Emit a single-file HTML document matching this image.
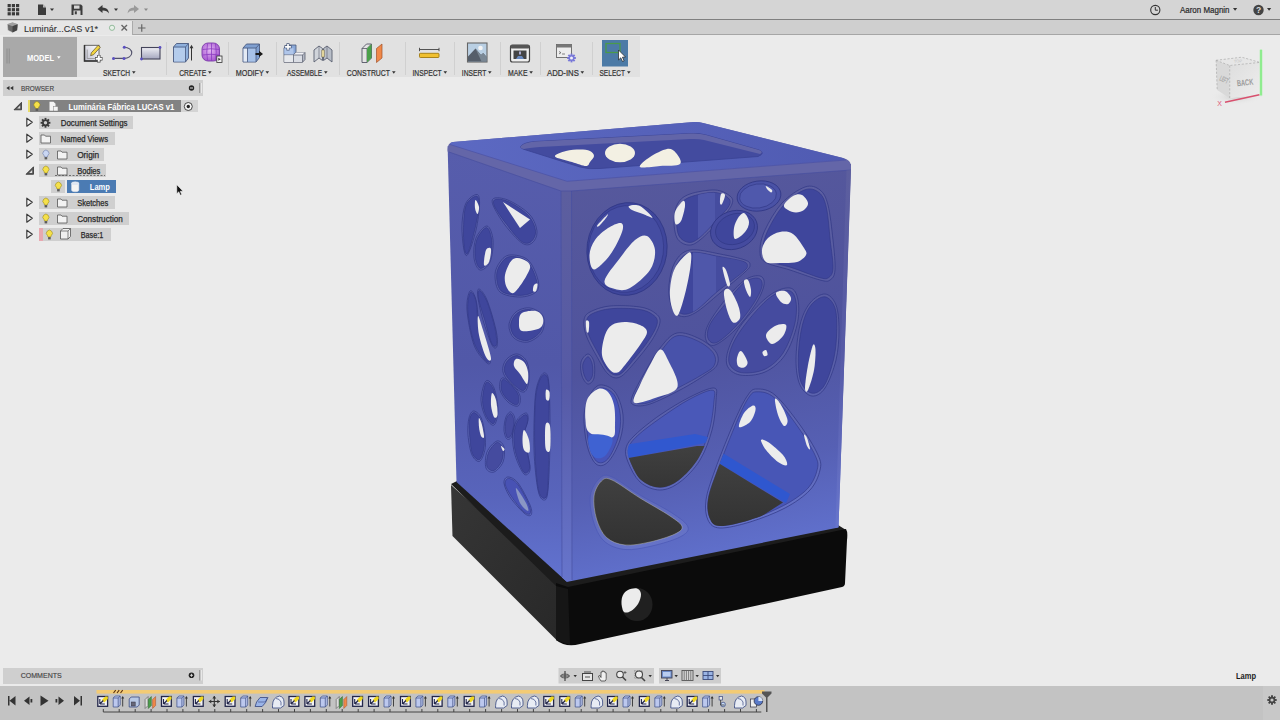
<!DOCTYPE html><html><head><meta charset="utf-8"><title>Fusion</title><style>
*{margin:0;padding:0;box-sizing:border-box}
html,body{width:1280px;height:720px;overflow:hidden;background:#ebebeb;font-family:"Liberation Sans",sans-serif;color:#333}
.abs{position:absolute}
#topbar{left:0;top:0;width:1280px;height:20px;background:#d5d5d5;border-bottom:1.5px solid #808080}
#tabbar{left:0;top:20px;width:1280px;height:15px;background:#cfcfcf;border-bottom:1px solid #a6a6a6}
#tab{left:0;top:20.5px;width:133px;height:14.5px;background:#e6e6e6;border-right:1px solid #aaa}
#tabtxt{left:24px;top:22.5px;font-size:9.6px;color:#333;letter-spacing:0.1px;white-space:nowrap}
#toolbar{left:2.5px;top:36.2px;width:637px;height:40.7px;background:#e1e1e1}
#modelbtn{left:2.8px;top:37px;width:74.2px;height:39.6px;background:#a9a9a9}
.tl{position:absolute;top:69px;font-size:7.7px;color:#3a3a3a;white-space:nowrap;letter-spacing:0.1px}
.sep{position:absolute;top:42px;width:1px;height:33px;background:#d0d0d0}
.hdr{position:absolute;left:3px;width:200px;background:#cfcfcf;font-size:7.4px;color:#444}
.row{position:absolute;height:12.4px;background:#cfcfcf}
.rt{position:absolute;font-size:7.6px;color:#2e2e2e;white-space:nowrap;letter-spacing:0.15px;-webkit-text-stroke:0.15px #2e2e2e}
#timeline{left:0;top:686.4px;width:1280px;height:34px;background:#c3c3c3}
#user{left:1180px;top:5.5px;font-size:8px;color:#333;white-space:nowrap}
svg{position:absolute;left:0;top:0}
</style></head><body>
<div class="abs" id="topbar"></div><div class="abs" id="tabbar"></div><div class="abs" id="tab"></div>
<div class="abs" id="toolbar"></div><div class="abs" id="modelbtn"></div>
<div class="sep" style="left:166.0px"></div>
<div class="sep" style="left:227.5px"></div>
<div class="sep" style="left:276.0px"></div>
<div class="sep" style="left:339.0px"></div>
<div class="sep" style="left:405.0px"></div>
<div class="sep" style="left:454.0px"></div>
<div class="sep" style="left:499.5px"></div>
<div class="sep" style="left:539.5px"></div>
<div class="sep" style="left:592.0px"></div>
<div class="hdr" style="top:79.7px;height:16.5px"></div>
<div class="hdr" style="top:667.5px;height:16px"></div>
<div class="row" style="left:28px;top:100.1px;width:2px;background:#e8dc6a"></div>
<div class="row" style="left:30px;top:100.1px;width:151px;background:#828282"></div>
<div class="row" style="left:181px;top:100.1px;width:17px;background:#d4d4d4"></div>
<div class="row" style="left:39.0px;top:116.2px;width:94.0px"></div>
<div class="row" style="left:39.0px;top:132.2px;width:75.5px"></div>
<div class="row" style="left:39.0px;top:148.2px;width:65.0px"></div>
<div class="row" style="left:39.0px;top:164.2px;width:67.3px"></div>
<div class="row" style="left:39.0px;top:196.2px;width:76.0px"></div>
<div class="row" style="left:39.0px;top:212.2px;width:89.7px"></div>
<div class="row" style="left:39.0px;top:228.2px;width:71.6px"></div>
<div class="row" style="left:39px;top:228.2px;width:3.5px;background:#e8a8b0"></div>
<div class="row" style="left:51px;top:180.2px;width:14px"></div>
<div class="row" style="left:67.3px;top:180.2px;width:49.2px;background:#4b7bb3"></div>
<div class="abs" id="timeline"></div>
<svg width="1280" height="720" viewBox="0 0 1280 720" font-family="Liberation Sans, sans-serif">
<defs>
<linearGradient id="gL" x1="0" y1="0" x2="0" y2="1"><stop offset="0" stop-color="#575dac"/><stop offset="0.5" stop-color="#5158a8"/><stop offset="0.8" stop-color="#5864bb"/><stop offset="1" stop-color="#6273d0"/></linearGradient>
<linearGradient id="gR" x1="0" y1="0" x2="0.15" y2="1"><stop offset="0" stop-color="#57599c"/><stop offset="0.5" stop-color="#4f539d"/><stop offset="0.8" stop-color="#5660b4"/><stop offset="1" stop-color="#6070cc"/></linearGradient>
<linearGradient id="gT" x1="0" y1="0" x2="1" y2="0"><stop offset="0" stop-color="#5c69c2"/><stop offset="1" stop-color="#505bb2"/></linearGradient>
<linearGradient id="gBL" x1="0" y1="0" x2="1" y2="1"><stop offset="0" stop-color="#363636"/><stop offset="1" stop-color="#282828"/></linearGradient>
<linearGradient id="gFl" x1="0" y1="0" x2="0" y2="1"><stop offset="0" stop-color="#404040"/><stop offset="1" stop-color="#323232"/></linearGradient>
<linearGradient id="gV" x1="0" y1="0" x2="0" y2="1"><stop offset="0" stop-color="#5c5e9e"/><stop offset="0.5" stop-color="#565aa6"/><stop offset="1" stop-color="#6775cc"/></linearGradient>
</defs>
<path d="M451.0 485.0L558.0 580.0L557.0 640.5L452.5 536.0Z" fill="url(#gBL)"/>
<path d="M451.0 484.0L457.0 481.0L566.0 580.0L838.0 525.0L846.0 530.0L568.0 588.0L556.0 586.0Z" fill="#1c1c1c"/>
<path d="M556 583 L568 587 L846 529 Q848 532 847 540 L845 583 Q845 586 842 587 L580 644 Q566 648 556 640 Z" fill="#0b0b0b"/>
<path d="M556.0 586.0L568.0 589.0L570.0 645.0L556.0 640.0Z" fill="#161616"/>
<ellipse cx="637" cy="604.5" rx="15.5" ry="16.5" fill="#202020"/>
<path d="M628.0 590.0C630.3 588.9 634.8 587.8 637.0 588.5C639.2 589.2 640.8 591.4 641.0 594.0C641.2 596.6 639.7 601.2 638.0 604.0C636.3 606.8 633.3 609.7 631.0 611.0C628.7 612.3 625.6 613.3 624.0 612.0C622.4 610.7 621.7 605.8 621.5 603.0C621.3 600.2 621.9 597.2 623.0 595.0C624.1 592.8 625.7 591.1 628.0 590.0Z" fill="#ececec"/>
<path d="M447.6 146.0L566.0 188.0L566.5 581.5L456.5 482.0Z" fill="url(#gL)"/>
<path d="M566.0 188.0L851.0 164.0L838.5 527.5L566.5 582.0Z" fill="url(#gR)"/>
<path d="M447.600 150 Q447.300 143 453 142 L694 122 Q698 121.5 703 123 L843 158 Q851 160 851 166 L851 170 L571 191 L561 191 L447.600 151.500Z" fill="#6466a8"/>
<path d="M450 144.5 Q450 142.5 453 142 L694 122 Q698 121.5 703 123 L841 157.5 Q848 159.5 843 160 L567 181.3 Z" fill="url(#gT)"/>
<path d="M561.0 191.0L571.5 191.0L572.0 580.5L566.5 581.5L562.0 577.5Z" fill="url(#gV)"/>
<path d="M561 191 L562 577" stroke="#4750a2" stroke-width="0.7" fill="none"/>
<path d="M571.5 191 L572 580" stroke="#4750a2" stroke-width="0.7" fill="none"/>
<path d="M449 152 L561 191 L571.5 191 L851 170" stroke="#474f9f" stroke-width="0.7" fill="none"/>
<path d="M450 144.5 L567 181.3 L846 160" stroke="#4a52a6" stroke-width="0.7" fill="none"/>
<path d="M846.5 170.5L851.0 170.0L838.5 527.0L835.5 528.0Z" fill="url(#gV)"/>
<path d="M521 146 Q524 142.5 535 141.5 L690 133.5 Q700 133 706 135 L759 150 Q766 153 758 156.5 L600 168.5 Q588 169.5 580 167 L526 150 Q519 148 521 146Z" fill="#434b9f" stroke="#3a4294" stroke-width="0.8"/>
<path d="M521 146 Q524 142.5 535 141.5 L690 133.5 Q700 133 706 135 L759 150 Q764 152 760 154 L704 140 Q698 138.5 690 139 L540 147 Q528 148 524 149 Q519 148 521 146Z" fill="#6265a8"/>
<path d="M555.0 156.5C554.0 154.7 561.8 152.2 566.0 151.0C570.2 149.8 576.0 149.5 580.0 149.5C584.0 149.5 587.7 149.9 590.0 151.0C592.3 152.1 594.0 154.2 594.0 156.0C594.0 157.8 591.3 160.3 590.0 162.0C588.7 163.7 589.0 166.0 586.0 166.0C583.0 166.0 577.2 163.6 572.0 162.0C566.8 160.4 556.0 158.3 555.0 156.5Z" fill="#f3f0e3"/>
<ellipse cx="620" cy="153" rx="15" ry="9.2" fill="#f3f0e3"/>
<path d="M640.0 167.0C638.3 165.5 645.5 160.0 650.0 157.0C654.5 154.0 662.7 149.7 667.0 149.0C671.3 148.3 673.8 150.5 676.0 153.0C678.2 155.5 682.7 161.8 680.0 164.0C677.3 166.2 666.7 165.5 660.0 166.0C653.3 166.5 641.7 168.5 640.0 167.0Z" fill="#f3f0e3"/>
<path d="M477.0 194.5C479.2 194.8 479.7 199.1 479.5 205.0C479.3 210.9 477.9 221.8 476.0 230.0C474.1 238.2 470.0 250.7 468.0 254.0C466.0 257.3 465.0 254.8 464.0 250.0C463.0 245.2 461.7 232.8 462.0 225.0C462.3 217.2 463.5 208.1 466.0 203.0C468.5 197.9 474.8 194.2 477.0 194.5Z" fill="rgba(255,255,255,0.05)" stroke="#2f3684" stroke-width="0.7"/>
<path d="M476.6 196.1C478.7 196.4 479.1 201.0 478.8 206.4C478.5 211.9 476.8 221.1 475.0 228.8C473.2 236.4 469.9 249.1 468.1 252.4C466.4 255.7 465.1 253.1 464.4 248.4C463.6 243.8 463.2 232.0 463.6 224.6C463.9 217.3 464.2 209.3 466.3 204.6C468.5 199.8 474.6 195.7 476.6 196.1Z" fill="#3f469c" stroke="#2f3684" stroke-width="0.6"/>
<path d="M475.5 200.0C476.2 199.8 478.7 204.7 479.0 207.0C479.3 209.3 478.2 213.8 477.5 214.0C476.8 214.2 475.3 210.3 475.0 208.0C474.7 205.7 474.8 200.2 475.5 200.0Z" fill="#ececec"/>
<path d="M495.0 198.0C497.8 197.3 504.2 198.2 510.0 201.0C515.8 203.8 525.5 209.8 530.0 215.0C534.5 220.2 536.7 227.3 537.0 232.0C537.3 236.7 534.5 241.2 532.0 243.0C529.5 244.8 526.5 246.0 522.0 243.0C517.5 240.0 509.8 231.3 505.0 225.0C500.2 218.7 494.7 209.5 493.0 205.0C491.3 200.5 492.2 198.7 495.0 198.0Z" fill="rgba(255,255,255,0.05)" stroke="#2f3684" stroke-width="0.7"/>
<path d="M496.1 199.2C498.8 198.6 505.0 199.8 510.4 202.5C515.8 205.3 524.3 210.8 528.5 215.5C532.7 220.3 535.2 226.9 535.6 231.2C536.0 235.6 533.4 240.0 531.1 241.7C528.7 243.4 525.7 244.4 521.6 241.5C517.5 238.6 511.0 230.3 506.5 224.3C501.9 218.4 496.1 210.1 494.3 205.9C492.6 201.7 493.4 199.7 496.1 199.2Z" fill="#3f469c" stroke="#2f3684" stroke-width="0.6"/>
<path d="M503.0 202.0L530.0 219.5L520.0 228.0Z" fill="#ececec"/>
<path d="M487.0 226.0C489.8 226.3 492.5 234.0 493.0 240.0C493.5 246.0 492.2 257.0 490.0 262.0C487.8 267.0 482.7 270.7 480.0 270.0C477.3 269.3 474.7 263.3 474.0 258.0C473.3 252.7 473.8 243.3 476.0 238.0C478.2 232.7 484.2 225.7 487.0 226.0Z" fill="rgba(255,255,255,0.05)" stroke="#2f3684" stroke-width="0.7"/>
<path d="M486.7 227.6C489.2 227.9 491.4 235.6 491.8 241.1C492.2 246.6 491.2 256.0 489.3 260.6C487.3 265.1 482.6 269.0 480.3 268.4C477.9 267.8 475.7 261.7 475.2 256.9C474.6 252.0 475.0 244.2 476.9 239.3C478.8 234.4 484.3 227.3 486.7 227.6Z" fill="#3f469c" stroke="#2f3684" stroke-width="0.6"/>
<path d="M486.0 250.0C487.2 247.3 490.5 247.0 491.0 249.0C491.5 251.0 490.2 259.3 489.0 262.0C487.8 264.7 484.5 267.0 484.0 265.0C483.5 263.0 484.8 252.7 486.0 250.0Z" fill="#ececec"/>
<path d="M510.0 255.0C514.7 254.7 523.3 255.8 528.0 260.0C532.7 264.2 536.7 274.7 538.0 280.0C539.3 285.3 539.0 289.2 536.0 292.0C533.0 294.8 526.0 297.0 520.0 297.0C514.0 297.0 504.2 295.7 500.0 292.0C495.8 288.3 495.0 280.0 495.0 275.0C495.0 270.0 497.5 265.3 500.0 262.0C502.5 258.7 505.3 255.3 510.0 255.0Z" fill="rgba(255,255,255,0.05)" stroke="#2f3684" stroke-width="0.7"/>
<path d="M510.4 256.5C514.7 256.2 522.7 257.4 527.1 261.3C531.4 265.2 535.1 274.8 536.4 279.8C537.7 284.7 537.5 288.4 534.7 291.0C531.9 293.6 525.3 295.5 519.7 295.4C514.1 295.4 505.0 294.3 501.1 290.9C497.3 287.5 496.6 279.8 496.6 275.1C496.6 270.5 498.9 266.2 501.2 263.1C503.5 260.0 506.1 256.8 510.4 256.5Z" fill="#3f469c" stroke="#2f3684" stroke-width="0.6"/>
<path d="M505.0 275.0C505.8 270.3 509.2 262.7 512.0 260.0C514.8 257.3 519.0 257.7 522.0 259.0C525.0 260.3 531.2 262.5 530.0 268.0C528.8 273.5 518.8 288.7 515.0 292.0C511.2 295.3 508.7 290.8 507.0 288.0C505.3 285.2 504.2 279.7 505.0 275.0Z" fill="#ececec"/>
<path d="M534.0 285.0C534.8 283.8 537.2 283.0 537.5 284.0C537.8 285.0 536.8 289.8 536.0 291.0C535.2 292.2 533.3 292.0 533.0 291.0C532.7 290.0 533.2 286.2 534.0 285.0Z" fill="#ececec"/>
<path d="M470.0 291.0C471.5 289.3 474.3 293.5 476.0 300.0C477.7 306.5 477.7 320.3 480.0 330.0C482.3 339.7 488.8 352.5 490.0 358.0C491.2 363.5 489.7 365.2 487.0 363.0C484.3 360.8 477.3 353.8 474.0 345.0C470.7 336.2 467.7 319.0 467.0 310.0C466.3 301.0 468.5 292.7 470.0 291.0Z" fill="rgba(255,255,255,0.05)" stroke="#2f3684" stroke-width="0.7"/>
<path d="M470.3 292.6C471.7 290.9 474.7 295.5 476.1 301.6C477.5 307.7 476.8 320.0 479.0 329.2C481.2 338.3 488.1 351.1 489.4 356.5C490.7 361.9 489.1 363.6 486.6 361.5C484.1 359.3 477.5 351.8 474.3 343.4C471.2 335.1 468.5 319.9 467.8 311.4C467.1 302.9 468.9 294.2 470.3 292.6Z" fill="#3f469c" stroke="#2f3684" stroke-width="0.6"/>
<path d="M479.0 289.0C480.5 289.3 484.2 293.2 487.0 300.0C489.8 306.8 494.3 322.3 496.0 330.0C497.7 337.7 497.7 343.5 497.0 346.0C496.3 348.5 494.3 349.3 492.0 345.0C489.7 340.7 485.3 327.8 483.0 320.0C480.7 312.2 478.7 303.2 478.0 298.0C477.3 292.8 477.5 288.7 479.0 289.0Z" fill="rgba(255,255,255,0.05)" stroke="#2f3684" stroke-width="0.7"/>
<path d="M479.4 290.5C480.8 290.9 484.4 295.2 487.0 301.6C489.6 308.0 493.5 321.6 495.1 328.7C496.6 335.9 497.0 342.0 496.5 344.5C495.9 346.9 493.7 347.6 491.7 343.4C489.7 339.2 486.7 326.8 484.5 319.4C482.3 312.1 479.5 304.3 478.7 299.5C477.8 294.6 478.0 290.2 479.4 290.5Z" fill="#3f469c" stroke="#2f3684" stroke-width="0.6"/>
<path d="M478.0 316.0C478.7 315.2 480.8 323.0 483.0 330.0C485.2 337.0 490.5 353.5 491.0 358.0C491.5 362.5 488.0 360.8 486.0 357.0C484.0 353.2 480.3 341.8 479.0 335.0C477.7 328.2 477.3 316.8 478.0 316.0Z" fill="#ececec"/>
<path d="M530.0 308.0C534.5 308.7 541.0 312.0 543.0 316.0C545.0 320.0 544.5 327.7 542.0 332.0C539.5 336.3 532.7 341.0 528.0 342.0C523.3 343.0 517.2 340.8 514.0 338.0C510.8 335.2 508.7 329.3 509.0 325.0C509.3 320.7 512.5 314.8 516.0 312.0C519.5 309.2 525.5 307.3 530.0 308.0Z" fill="rgba(255,255,255,0.05)" stroke="#2f3684" stroke-width="0.7"/>
<path d="M529.6 309.6C533.7 310.1 539.8 313.1 541.6 316.7C543.4 320.4 542.8 327.4 540.5 331.3C538.3 335.3 532.1 339.5 527.8 340.4C523.6 341.3 517.9 339.4 515.1 336.8C512.2 334.2 510.3 328.9 510.6 325.0C510.9 321.0 513.8 315.8 517.0 313.3C520.2 310.7 525.5 309.0 529.6 309.6Z" fill="#3f469c" stroke="#2f3684" stroke-width="0.6"/>
<path d="M522.0 313.0C524.8 311.2 532.5 310.2 536.0 311.0C539.5 311.8 542.3 315.2 543.0 318.0C543.7 320.8 543.5 325.8 540.0 328.0C536.5 330.2 525.5 332.0 522.0 331.0C518.5 330.0 519.0 325.0 519.0 322.0C519.0 319.0 519.2 314.8 522.0 313.0Z" fill="#ececec"/>
<path d="M502.0 378.0C504.0 377.0 509.0 381.0 512.0 384.0C515.0 387.0 519.0 392.3 520.0 396.0C521.0 399.7 520.0 405.0 518.0 406.0C516.0 407.0 511.0 404.7 508.0 402.0C505.0 399.3 501.0 394.0 500.0 390.0C499.0 386.0 500.0 379.0 502.0 378.0Z" fill="rgba(255,255,255,0.05)" stroke="#2f3684" stroke-width="0.7"/>
<path d="M502.8 379.4C504.4 378.6 509.0 382.9 511.6 385.6C514.3 388.2 517.6 392.3 518.5 395.5C519.4 398.7 518.9 403.8 517.2 404.6C515.5 405.5 510.9 402.8 508.3 400.4C505.7 398.1 502.5 393.9 501.5 390.4C500.6 386.9 501.1 380.2 502.8 379.4Z" fill="#3f469c" stroke="#2f3684" stroke-width="0.6"/>
<path d="M517.0 354.0C520.5 354.3 525.0 357.7 527.0 362.0C529.0 366.3 529.5 375.0 529.0 380.0C528.5 385.0 526.8 391.2 524.0 392.0C521.2 392.8 515.5 388.3 512.0 385.0C508.5 381.7 504.0 376.2 503.0 372.0C502.0 367.8 503.7 363.0 506.0 360.0C508.3 357.0 513.5 353.7 517.0 354.0Z" fill="rgba(255,255,255,0.05)" stroke="#2f3684" stroke-width="0.7"/>
<path d="M517.0 355.6C520.1 355.9 524.1 359.2 525.9 363.1C527.6 367.1 528.1 374.6 527.7 379.1C527.3 383.7 526.0 389.8 523.5 390.5C520.9 391.2 515.7 386.6 512.6 383.5C509.4 380.4 505.5 375.7 504.6 372.0C503.7 368.3 505.0 363.9 507.1 361.2C509.1 358.5 513.9 355.3 517.0 355.6Z" fill="#3f469c" stroke="#2f3684" stroke-width="0.6"/>
<path d="M516.0 359.0C517.7 358.3 522.0 359.8 524.0 362.0C526.0 364.2 527.5 368.3 528.0 372.0C528.5 375.7 528.3 383.7 527.0 384.0C525.7 384.3 522.2 377.0 520.0 374.0C517.8 371.0 514.7 368.5 514.0 366.0C513.3 363.5 514.3 359.7 516.0 359.0Z" fill="#ececec"/>
<path d="M486.0 381.0C488.2 379.0 492.0 383.2 494.0 388.0C496.0 392.8 498.0 403.8 498.0 410.0C498.0 416.2 496.0 423.7 494.0 425.0C492.0 426.3 488.2 422.2 486.0 418.0C483.8 413.8 481.0 406.2 481.0 400.0C481.0 393.8 483.8 383.0 486.0 381.0Z" fill="rgba(255,255,255,0.05)" stroke="#2f3684" stroke-width="0.7"/>
<path d="M486.3 382.6C488.1 380.7 491.8 385.1 493.6 389.5C495.3 394.0 496.7 403.4 496.7 409.0C496.8 414.7 495.4 422.2 493.7 423.4C492.0 424.7 488.3 420.3 486.4 416.5C484.5 412.7 482.5 406.3 482.5 400.6C482.5 395.0 484.4 384.4 486.3 382.6Z" fill="#3f469c" stroke="#2f3684" stroke-width="0.6"/>
<path d="M492.0 393.0C492.8 392.2 495.1 396.3 496.0 400.0C496.9 403.7 497.8 412.2 497.5 415.0C497.2 417.8 495.1 418.7 494.0 417.0C492.9 415.3 491.3 409.0 491.0 405.0C490.7 401.0 491.2 393.8 492.0 393.0Z" fill="#ececec"/>
<path d="M474.0 411.0C476.2 411.3 480.1 414.3 482.0 420.0C483.9 425.7 485.8 438.2 485.5 445.0C485.2 451.8 482.2 459.3 480.0 461.0C477.8 462.7 474.0 459.3 472.0 455.0C470.0 450.7 468.5 441.2 468.0 435.0C467.5 428.8 468.0 422.0 469.0 418.0C470.0 414.0 471.8 410.7 474.0 411.0Z" fill="rgba(255,255,255,0.05)" stroke="#2f3684" stroke-width="0.7"/>
<path d="M474.1 412.6C476.1 412.9 479.7 416.3 481.4 421.5C483.1 426.7 484.7 437.5 484.4 443.9C484.1 450.2 481.8 457.8 479.7 459.4C477.7 461.0 474.0 457.5 472.3 453.4C470.6 449.4 470.1 440.7 469.6 435.0C469.1 429.3 468.8 423.2 469.6 419.5C470.3 415.8 472.2 412.3 474.1 412.6Z" fill="#3f469c" stroke="#2f3684" stroke-width="0.6"/>
<path d="M479.0 418.0C479.5 417.7 481.2 421.8 482.0 425.0C482.8 428.2 484.2 435.2 484.0 437.0C483.8 438.8 481.8 437.7 481.0 436.0C480.2 434.3 479.3 430.0 479.0 427.0C478.7 424.0 478.5 418.3 479.0 418.0Z" fill="#ececec"/>
<path d="M511.0 412.0C512.5 412.5 514.8 416.0 515.0 420.0C515.2 424.0 513.3 432.8 512.0 436.0C510.7 439.2 508.3 440.0 507.0 439.0C505.7 438.0 504.2 433.7 504.0 430.0C503.8 426.3 504.8 420.0 506.0 417.0C507.2 414.0 509.5 411.5 511.0 412.0Z" fill="rgba(255,255,255,0.05)" stroke="#2f3684" stroke-width="0.7"/>
<path d="M510.8 413.6C512.0 414.0 513.7 417.6 513.9 421.1C514.0 424.6 512.7 431.7 511.6 434.5C510.5 437.2 508.3 438.3 507.3 437.4C506.2 436.5 505.3 432.1 505.2 429.0C505.1 425.8 505.6 421.1 506.5 418.5C507.5 415.9 509.6 413.2 510.8 413.6Z" fill="#454b9f" stroke="#2f3684" stroke-width="0.6"/>
<path d="M526.0 413.0C527.8 413.0 528.3 416.3 528.0 420.0C527.7 423.7 524.0 429.2 524.0 435.0C524.0 440.8 527.0 449.2 528.0 455.0C529.0 460.8 530.7 466.8 530.0 470.0C529.3 473.2 526.5 476.5 524.0 474.0C521.5 471.5 516.9 461.5 515.0 455.0C513.1 448.5 512.2 440.8 512.5 435.0C512.8 429.2 514.8 423.7 517.0 420.0C519.2 416.3 524.2 413.0 526.0 413.0Z" fill="rgba(255,255,255,0.05)" stroke="#2f3684" stroke-width="0.7"/>
<path d="M525.8 414.6C527.5 414.6 528.0 417.9 527.6 421.6C527.3 425.2 523.7 431.2 523.7 436.6C523.7 441.9 526.4 448.2 527.4 453.5C528.4 458.8 530.2 465.3 529.6 468.5C529.0 471.6 526.2 474.9 523.9 472.4C521.6 469.9 517.5 459.7 515.8 453.6C514.1 447.5 513.6 441.2 513.8 435.9C514.1 430.5 515.4 425.1 517.4 421.5C519.4 418.0 524.1 414.6 525.8 414.6Z" fill="#3f469c" stroke="#2f3684" stroke-width="0.6"/>
<path d="M524.0 430.0C525.1 430.0 528.1 436.3 529.0 440.0C529.9 443.7 530.3 450.3 529.5 452.0C528.7 453.7 525.2 452.0 524.0 450.0C522.8 448.0 522.5 443.3 522.5 440.0C522.5 436.7 522.9 430.0 524.0 430.0Z" fill="#ececec"/>
<path d="M497.0 441.0C499.8 440.2 503.0 443.5 504.0 447.0C505.0 450.5 504.7 457.8 503.0 462.0C501.3 466.2 496.8 471.0 494.0 472.0C491.2 473.0 487.2 471.3 486.0 468.0C484.8 464.7 485.2 456.5 487.0 452.0C488.8 447.5 494.2 441.8 497.0 441.0Z" fill="rgba(255,255,255,0.05)" stroke="#2f3684" stroke-width="0.7"/>
<path d="M496.8 442.6C499.2 441.8 502.1 445.1 502.9 448.2C503.7 451.3 503.1 457.4 501.7 461.1C500.2 464.8 496.6 469.5 494.1 470.4C491.7 471.3 488.0 469.7 487.0 466.8C486.1 463.8 486.7 456.9 488.4 452.8C490.0 448.8 494.4 443.4 496.8 442.6Z" fill="#454b9f" stroke="#2f3684" stroke-width="0.6"/>
<path d="M501.0 446.0C501.2 445.7 504.2 448.2 504.5 449.0C504.8 449.8 503.6 451.5 503.0 451.0C502.4 450.5 500.8 446.3 501.0 446.0Z" fill="#ececec"/>
<path d="M545.0 373.0C546.7 373.8 548.2 373.8 549.0 385.0C549.8 396.2 550.2 422.5 550.0 440.0C549.8 457.5 549.0 480.0 548.0 490.0C547.0 500.0 545.7 500.0 544.0 500.0C542.3 500.0 539.7 498.3 538.0 490.0C536.3 481.7 534.5 465.0 534.0 450.0C533.5 435.0 534.2 411.7 535.0 400.0C535.8 388.3 537.3 384.5 539.0 380.0C540.7 375.5 543.3 372.2 545.0 373.0Z" fill="rgba(255,255,255,0.05)" stroke="#2f3684" stroke-width="0.7"/>
<path d="M544.9 374.6C546.5 375.4 548.2 375.8 548.8 386.6C549.4 397.3 548.9 422.1 548.7 439.0C548.6 456.0 548.6 478.5 547.8 488.4C547.0 498.3 545.6 498.4 544.0 498.4C542.3 498.4 539.7 496.7 538.1 488.4C536.6 480.1 535.2 463.1 534.8 448.6C534.3 434.1 534.6 412.7 535.3 401.6C536.1 390.4 537.5 386.1 539.1 381.6C540.7 377.1 543.3 373.8 544.9 374.6Z" fill="#3f469c" stroke="#2f3684" stroke-width="0.6"/>
<path d="M546.0 390.0C546.6 388.8 549.0 390.3 549.5 392.0C550.0 393.7 549.6 398.8 549.0 400.0C548.4 401.2 546.5 400.7 546.0 399.0C545.5 397.3 545.4 391.2 546.0 390.0Z" fill="#ececec"/>
<path d="M545.5 425.0C546.2 421.3 549.2 421.8 550.0 426.0C550.8 430.2 550.8 446.3 550.0 450.0C549.2 453.7 546.2 452.2 545.5 448.0C544.8 443.8 544.8 428.7 545.5 425.0Z" fill="#ececec"/>
<path d="M508.0 477.0C510.3 477.0 514.3 478.3 518.0 483.0C521.7 487.7 527.8 499.7 530.0 505.0C532.2 510.3 532.0 513.7 531.0 515.0C530.0 516.3 527.5 516.0 524.0 513.0C520.5 510.0 513.3 502.0 510.0 497.0C506.7 492.0 504.3 486.3 504.0 483.0C503.7 479.7 505.7 477.0 508.0 477.0Z" fill="rgba(255,255,255,0.05)" stroke="#2f3684" stroke-width="0.7"/>
<path d="M508.7 478.4C510.9 478.5 514.7 480.3 518.0 484.6C521.3 488.9 526.7 499.2 528.7 504.1C530.7 508.9 531.0 512.4 530.1 513.7C529.2 514.9 526.5 514.3 523.5 511.5C520.4 508.7 514.6 501.4 511.6 496.8C508.5 492.3 505.6 487.2 505.2 484.1C504.7 481.0 506.6 478.3 508.7 478.4Z" fill="#4852b4" stroke="#2f3684" stroke-width="0.6"/>
<path d="M516.0 488.0C517.0 488.0 524.0 499.2 526.0 503.0C528.0 506.8 529.0 511.0 528.0 511.0C527.0 511.0 522.0 506.8 520.0 503.0C518.0 499.2 515.0 488.0 516.0 488.0Z" fill="#8a96c4"/>
<ellipse cx="627" cy="249" rx="40" ry="46.5" fill="#3f469c" stroke="#2f3684" stroke-width="0.8" transform="rotate(8 627 249)"/>
<ellipse cx="626" cy="249" rx="37.5" ry="43.5" fill="#454da2" stroke="#2f3684" stroke-width="0.6" transform="rotate(8 626 249)"/>
<path d="M597.5 225.0C598.9 223.1 606.1 215.7 607.5 214.5C608.9 213.3 607.4 216.1 606.0 218.0C604.6 219.9 600.4 224.8 599.0 226.0C597.6 227.2 596.1 226.9 597.5 225.0Z" fill="#ececec"/>
<path d="M629.0 206.0C630.3 205.3 636.1 204.1 640.0 206.0C643.9 207.9 652.0 216.2 652.5 217.5C653.0 218.8 646.4 215.2 643.0 214.0C639.6 212.8 634.3 211.3 632.0 210.0C629.7 208.7 627.7 206.7 629.0 206.0Z" fill="#ececec"/>
<path d="M621.0 223.0C623.3 223.7 623.8 226.7 622.0 232.0C620.2 237.3 614.7 248.8 610.0 255.0C605.3 261.2 597.4 269.5 594.0 269.5C590.6 269.5 589.3 259.9 589.5 255.0C589.7 250.1 591.9 244.5 595.0 240.0C598.1 235.5 603.7 230.8 608.0 228.0C612.3 225.2 618.7 222.3 621.0 223.0Z" fill="#ececec"/>
<path d="M647.0 236.0C650.3 237.7 654.5 244.3 655.0 250.0C655.5 255.7 654.2 263.7 650.0 270.0C645.8 276.3 635.8 284.8 630.0 288.0C624.2 291.2 619.2 290.2 615.0 289.0C610.8 287.8 603.7 286.2 604.5 281.0C605.3 275.8 614.9 264.8 620.0 258.0C625.1 251.2 630.5 243.7 635.0 240.0C639.5 236.3 643.7 234.3 647.0 236.0Z" fill="#ececec"/>
<path d="M690.0 194.0C696.2 191.8 708.3 189.7 715.0 190.0C721.7 190.3 727.2 193.7 730.0 196.0C732.8 198.3 733.3 200.3 732.0 204.0C730.7 207.7 727.3 212.0 722.0 218.0C716.7 224.0 705.7 235.5 700.0 240.0C694.3 244.5 691.8 245.3 688.0 245.0C684.2 244.7 679.3 242.2 677.0 238.0C674.7 233.8 673.8 225.8 674.0 220.0C674.2 214.2 675.3 207.3 678.0 203.0C680.7 198.7 683.8 196.2 690.0 194.0Z" fill="rgba(255,255,255,0.05)" stroke="#2f3684" stroke-width="0.7"/>
<path d="M691.3 196.5C696.8 194.5 707.5 192.3 713.6 192.4C719.7 192.6 725.0 195.4 727.6 197.5C730.3 199.6 730.8 201.6 729.4 204.9C728.0 208.3 724.1 212.2 719.2 217.6C714.3 223.0 705.1 233.1 700.1 237.2C695.0 241.3 692.6 242.6 689.1 242.4C685.6 242.2 681.1 239.9 679.0 236.0C676.9 232.2 676.5 224.8 676.7 219.5C677.0 214.2 678.1 208.1 680.5 204.3C682.9 200.5 685.8 198.5 691.3 196.5Z" fill="#3f469c" stroke="#2f3684" stroke-width="0.6"/>
<clipPath id="cR2"><path d="M691.5 196.9C696.9 194.9 707.4 192.6 713.4 192.8C719.4 192.9 724.7 195.7 727.3 197.7C729.9 199.8 730.4 201.7 729.0 205.0C727.6 208.3 723.7 212.2 718.8 217.5C714.0 222.8 705.0 232.7 700.1 236.8C695.1 240.9 692.7 242.2 689.2 242.0C685.8 241.9 681.3 239.5 679.3 235.8C677.3 232.0 676.9 224.6 677.1 219.4C677.4 214.2 678.5 208.2 680.8 204.5C683.2 200.7 686.0 198.8 691.5 196.9Z"/></clipPath>
<rect x="698" y="185" width="17" height="70" fill="#4f57aa" clip-path="url(#cR2)"/>
<rect x="715" y="185" width="20" height="70" fill="#454c9f" clip-path="url(#cR2)"/>
<path d="M683.0 201.0C684.7 200.0 685.3 202.7 685.0 206.0C684.7 209.3 682.6 218.0 681.0 221.0C679.4 224.0 676.5 225.5 675.5 224.0C674.5 222.5 673.8 215.8 675.0 212.0C676.2 208.2 681.3 202.0 683.0 201.0Z" fill="#ececec"/>
<path d="M721.0 194.0C721.8 192.7 724.8 193.3 725.0 195.0C725.2 196.7 722.8 202.7 722.0 204.0C721.2 205.3 720.2 204.7 720.0 203.0C719.8 201.3 720.2 195.3 721.0 194.0Z" fill="#ececec"/>
<ellipse cx="759" cy="196" rx="22" ry="15" fill="#4a52a6" stroke="#2f3684" stroke-width="0.8" transform="rotate(-8 759 196)"/>
<ellipse cx="758" cy="196" rx="18.5" ry="12" fill="#4f58ac" stroke="#2f3684" stroke-width="0.6" transform="rotate(-8 758 196)"/>
<path d="M766.0 186.0C766.8 186.2 771.2 188.9 772.0 190.0C772.8 191.1 771.8 192.7 771.0 192.5C770.2 192.3 767.8 190.1 767.0 189.0C766.2 187.9 765.2 185.8 766.0 186.0Z" fill="#ececec"/>
<ellipse cx="734" cy="230" rx="24" ry="19" fill="#454b9f" stroke="#2f3684" stroke-width="0.8" transform="rotate(-20 734 230)"/>
<ellipse cx="735" cy="229" rx="20" ry="15" fill="#3f469c" stroke="#2f3684" stroke-width="0.6" transform="rotate(-20 735 229)"/>
<path d="M744.0 213.0C745.8 213.7 748.8 218.8 749.0 222.0C749.2 225.2 747.3 229.2 745.0 232.0C742.7 234.8 736.8 239.7 735.0 239.0C733.2 238.3 733.5 231.5 734.0 228.0C734.5 224.5 736.3 220.5 738.0 218.0C739.7 215.5 742.2 212.3 744.0 213.0Z" fill="#ececec"/>
<path d="M805.0 187.0C811.3 184.8 816.2 187.0 820.0 190.0C823.8 193.0 825.8 196.7 828.0 205.0C830.2 213.3 831.8 229.2 833.0 240.0C834.2 250.8 835.5 263.3 835.0 270.0C834.5 276.7 832.5 278.3 830.0 280.0C827.5 281.7 826.7 281.7 820.0 280.0C813.3 278.3 799.2 273.0 790.0 270.0C780.8 267.0 770.0 265.3 765.0 262.0C760.0 258.7 760.0 255.3 760.0 250.0C760.0 244.7 761.3 237.8 765.0 230.0C768.7 222.2 775.3 210.2 782.0 203.0C788.7 195.8 798.7 189.2 805.0 187.0Z" fill="rgba(255,255,255,0.05)" stroke="#2f3684" stroke-width="0.7"/>
<path d="M804.9 189.8C810.8 187.7 815.5 189.7 819.1 192.6C822.6 195.5 824.5 199.4 826.3 207.2C828.2 215.1 829.1 229.8 830.2 239.9C831.3 250.0 833.3 261.8 833.0 268.1C832.7 274.4 830.8 276.1 828.5 277.7C826.1 279.2 825.1 279.1 818.9 277.4C812.7 275.7 799.7 270.2 791.1 267.4C782.5 264.6 772.1 263.6 767.4 260.5C762.7 257.5 762.7 254.3 762.7 249.3C762.8 244.3 764.3 238.0 767.7 230.6C771.2 223.3 777.2 212.2 783.4 205.4C789.6 198.6 798.9 191.9 804.9 189.8Z" fill="#3f469c" stroke="#2f3684" stroke-width="0.6"/>
<path d="M784.0 205.0C784.8 202.7 790.0 197.7 793.0 196.0C796.0 194.3 799.5 193.8 802.0 195.0C804.5 196.2 807.7 200.5 808.0 203.0C808.3 205.5 806.0 208.4 804.0 210.0C802.0 211.6 798.7 212.5 796.0 212.5C793.3 212.5 790.0 211.2 788.0 210.0C786.0 208.8 783.2 207.3 784.0 205.0Z" fill="#ececec"/>
<path d="M762.0 250.0C762.3 246.0 765.0 241.0 768.0 238.0C771.0 235.0 775.8 232.7 780.0 232.0C784.2 231.3 789.0 231.3 793.0 234.0C797.0 236.7 801.8 244.5 804.0 248.0C806.2 251.5 807.2 252.7 806.0 255.0C804.8 257.3 801.3 260.7 797.0 262.0C792.7 263.3 785.2 263.0 780.0 263.0C774.8 263.0 769.0 264.2 766.0 262.0C763.0 259.8 761.7 254.0 762.0 250.0Z" fill="#ececec"/>
<path d="M690.0 250.0C697.5 248.7 710.8 252.3 720.0 254.0C729.2 255.7 740.0 258.2 745.0 260.0C750.0 261.8 750.0 263.0 750.0 265.0C750.0 267.0 750.0 267.3 745.0 272.0C740.0 276.7 728.3 286.2 720.0 293.0C711.7 299.8 701.7 309.2 695.0 313.0C688.3 316.8 684.0 317.3 680.0 316.0C676.0 314.7 672.8 310.2 671.0 305.0C669.2 299.8 668.3 292.2 669.0 285.0C669.7 277.8 671.5 267.8 675.0 262.0C678.5 256.2 682.5 251.3 690.0 250.0Z" fill="rgba(255,255,255,0.05)" stroke="#2f3684" stroke-width="0.7"/>
<path d="M691.3 252.5C698.2 251.3 710.1 255.0 718.6 256.4C727.1 257.9 737.7 259.7 742.5 261.2C747.3 262.8 747.4 264.0 747.3 265.9C747.3 267.7 747.1 268.3 742.2 272.5C737.4 276.7 725.7 284.8 717.9 291.1C710.2 297.4 701.9 306.6 695.8 310.3C689.8 314.1 685.4 314.9 681.6 313.7C677.8 312.5 674.9 308.2 673.3 303.3C671.6 298.5 671.1 291.2 671.8 284.6C672.5 277.9 674.2 268.7 677.4 263.4C680.7 258.0 684.4 253.6 691.3 252.5Z" fill="#3f469c" stroke="#2f3684" stroke-width="0.6"/>
<clipPath id="cR3"><path d="M691.5 252.8C698.3 251.7 710.0 255.4 718.4 256.8C726.9 258.2 737.4 259.9 742.1 261.4C746.9 263.0 747.0 264.1 747.0 266.0C746.9 267.9 746.7 268.5 741.9 272.6C737.0 276.7 725.3 284.6 717.7 290.8C710.0 297.1 701.9 306.2 696.0 309.9C690.0 313.7 685.6 314.5 681.8 313.4C678.1 312.2 675.2 307.9 673.6 303.1C672.0 298.3 671.5 291.1 672.2 284.5C672.9 277.9 674.6 268.9 677.8 263.6C681.0 258.3 684.7 254.0 691.5 252.8Z"/></clipPath>
<rect x="693" y="245" width="23" height="80" fill="#4f57aa" clip-path="url(#cR3)"/>
<rect x="716" y="245" width="40" height="80" fill="#454c9f" clip-path="url(#cR3)"/>
<path d="M689.0 252.5C691.7 251.5 691.5 255.8 691.0 262.0C690.5 268.2 688.2 281.2 686.0 290.0C683.8 298.8 680.3 312.0 678.0 315.0C675.7 318.0 673.3 312.2 672.0 308.0C670.7 303.8 669.5 296.7 670.0 290.0C670.5 283.3 671.8 274.2 675.0 268.0C678.2 261.8 686.3 253.5 689.0 252.5Z" fill="#ececec"/>
<path d="M760.0 276.0C763.2 276.8 764.8 280.2 764.0 285.0C763.2 289.8 759.8 297.5 755.0 305.0C750.2 312.5 741.7 323.3 735.0 330.0C728.3 336.7 719.8 343.3 715.0 345.0C710.2 346.7 707.2 343.3 706.0 340.0C704.8 336.7 704.8 331.7 708.0 325.0C711.2 318.3 718.8 307.5 725.0 300.0C731.2 292.5 739.2 284.0 745.0 280.0C750.8 276.0 756.8 275.2 760.0 276.0Z" fill="rgba(255,255,255,0.05)" stroke="#2f3684" stroke-width="0.7"/>
<path d="M758.3 278.2C761.3 278.9 762.9 282.2 761.9 286.8C760.8 291.4 756.7 298.9 752.3 305.6C747.8 312.3 741.0 321.0 735.0 327.2C729.0 333.4 720.9 340.8 716.4 342.6C711.9 344.3 708.9 341.1 707.9 338.0C706.9 334.8 707.2 329.6 710.4 323.6C713.6 317.6 721.4 308.8 727.0 302.0C732.6 295.1 738.9 286.6 744.1 282.6C749.3 278.7 755.4 277.5 758.3 278.2Z" fill="#454b9f" stroke="#2f3684" stroke-width="0.6"/>
<path d="M722.5 268.0C722.3 265.5 724.8 267.3 726.0 270.0C727.2 272.7 729.8 281.5 730.0 284.0C730.2 286.5 728.2 287.7 727.0 285.0C725.8 282.3 722.7 270.5 722.5 268.0Z" fill="#ececec"/>
<path d="M724.0 292.0C724.5 288.7 727.7 287.8 730.0 290.0C732.3 292.2 736.3 300.3 738.0 305.0C739.7 309.7 740.8 315.1 740.0 318.0C739.2 320.9 735.2 323.8 733.0 322.5C730.8 321.2 728.5 315.1 727.0 310.0C725.5 304.9 723.5 295.3 724.0 292.0Z" fill="#ececec"/>
<path d="M744.0 281.0C744.3 279.3 746.8 278.5 748.0 280.0C749.2 281.5 750.7 287.2 751.0 290.0C751.3 292.8 750.8 297.0 750.0 297.0C749.2 297.0 747.0 292.7 746.0 290.0C745.0 287.3 743.7 282.7 744.0 281.0Z" fill="#ececec"/>
<path d="M790.0 288.0C794.7 288.8 796.8 293.8 798.0 300.0C799.2 306.2 799.2 315.8 797.0 325.0C794.8 334.2 790.3 347.2 785.0 355.0C779.7 362.8 772.5 368.7 765.0 372.0C757.5 375.3 746.3 376.2 740.0 375.0C733.7 373.8 728.7 370.0 727.0 365.0C725.3 360.0 727.0 352.5 730.0 345.0C733.0 337.5 738.3 328.3 745.0 320.0C751.7 311.7 762.5 300.3 770.0 295.0C777.5 289.7 785.3 287.2 790.0 288.0Z" fill="rgba(255,255,255,0.05)" stroke="#2f3684" stroke-width="0.7"/>
<path d="M788.7 290.5C793.1 291.2 795.1 296.1 796.0 302.0C797.0 307.9 796.5 317.3 794.3 325.8C792.1 334.2 787.9 345.7 783.1 353.0C778.2 360.2 771.9 365.9 765.0 369.2C758.0 372.5 747.4 373.6 741.4 372.6C735.5 371.6 730.6 368.0 729.2 363.2C727.7 358.5 729.6 351.1 732.7 344.2C735.7 337.2 741.1 329.4 747.3 321.6C753.4 313.9 762.7 303.0 769.6 297.8C776.5 292.6 784.2 289.7 788.7 290.5Z" fill="#454b9f" stroke="#2f3684" stroke-width="0.6"/>
<path d="M776.0 293.0C776.7 291.2 782.5 290.2 785.0 291.0C787.5 291.8 790.5 295.8 791.0 298.0C791.5 300.2 789.7 303.3 788.0 304.0C786.3 304.7 783.0 303.8 781.0 302.0C779.0 300.2 775.3 294.8 776.0 293.0Z" fill="#ececec"/>
<path d="M766.0 335.0C766.5 332.0 771.7 327.7 775.0 326.0C778.3 324.3 784.7 323.3 786.0 325.0C787.3 326.7 785.3 332.8 783.0 336.0C780.7 339.2 774.8 344.2 772.0 344.0C769.2 343.8 765.5 338.0 766.0 335.0Z" fill="#ececec"/>
<path d="M737.0 358.0C737.5 355.5 739.2 350.3 741.0 351.0C742.8 351.7 747.0 359.2 747.5 362.0C748.0 364.8 745.6 366.8 744.0 367.5C742.4 368.2 739.2 367.6 738.0 366.0C736.8 364.4 736.5 360.5 737.0 358.0Z" fill="#ececec"/>
<path d="M762.5 352.0C762.8 351.0 765.2 349.5 766.0 350.0C766.8 350.5 767.8 354.0 767.5 355.0C767.2 356.0 764.8 356.5 764.0 356.0C763.2 355.5 762.2 353.0 762.5 352.0Z" fill="#ececec"/>
<path d="M825.0 294.0C829.3 294.3 833.7 299.0 836.0 305.0C838.3 311.0 839.0 320.8 839.0 330.0C839.0 339.2 838.3 350.3 836.0 360.0C833.7 369.7 829.0 382.0 825.0 388.0C821.0 394.0 816.2 396.5 812.0 396.0C807.8 395.5 802.7 391.0 800.0 385.0C797.3 379.0 796.0 370.0 796.0 360.0C796.0 350.0 797.7 334.5 800.0 325.0C802.3 315.5 805.8 308.2 810.0 303.0C814.2 297.8 820.7 293.7 825.0 294.0Z" fill="rgba(255,255,255,0.05)" stroke="#2f3684" stroke-width="0.7"/>
<path d="M824.6 296.8C828.7 297.1 832.8 301.7 834.8 307.5C836.9 313.3 836.9 323.2 836.7 331.6C836.5 340.0 835.9 349.2 833.9 358.2C831.8 367.1 828.1 379.4 824.5 385.2C821.0 391.1 816.2 393.7 812.3 393.2C808.4 392.8 803.5 388.2 801.1 382.4C798.8 376.6 798.2 367.6 798.3 358.4C798.4 349.2 799.8 335.8 801.9 327.1C803.9 318.3 806.7 310.8 810.5 305.8C814.3 300.7 820.6 296.5 824.6 296.8Z" fill="#3f469c" stroke="#2f3684" stroke-width="0.6"/>
<path d="M813.0 345.0C814.2 342.5 815.3 345.8 815.5 350.0C815.7 354.2 815.2 363.3 814.0 370.0C812.8 376.7 809.5 387.0 808.0 390.0C806.5 393.0 805.0 392.2 805.0 388.0C805.0 383.8 806.7 372.2 808.0 365.0C809.3 357.8 811.8 347.5 813.0 345.0Z" fill="#ececec"/>
<path d="M590.0 312.0C594.3 309.7 601.7 306.8 610.0 306.0C618.3 305.2 632.5 305.8 640.0 307.0C647.5 308.2 651.7 310.5 655.0 313.0C658.3 315.5 660.5 317.5 660.0 322.0C659.5 326.5 656.2 333.3 652.0 340.0C647.8 346.7 640.3 355.8 635.0 362.0C629.7 368.2 624.5 375.0 620.0 377.0C615.5 379.0 612.0 377.7 608.0 374.0C604.0 370.3 599.7 361.5 596.0 355.0C592.3 348.5 588.0 340.8 586.0 335.0C584.0 329.2 583.3 323.8 584.0 320.0C584.7 316.2 585.7 314.3 590.0 312.0Z" fill="rgba(255,255,255,0.05)" stroke="#2f3684" stroke-width="0.7"/>
<path d="M592.2 313.7C596.3 311.7 603.2 309.4 610.9 308.7C618.6 307.9 631.4 308.3 638.4 309.3C645.3 310.2 649.5 312.2 652.6 314.5C655.8 316.8 657.9 318.7 657.3 322.9C656.8 327.1 653.2 333.5 649.2 339.6C645.3 345.7 638.5 353.8 633.6 359.6C628.7 365.3 624.1 372.2 620.0 374.2C615.8 376.2 612.4 374.8 608.8 371.3C605.2 367.8 601.5 359.3 598.1 353.2C594.8 347.2 590.7 340.4 588.8 335.0C586.9 329.7 586.0 324.6 586.6 321.1C587.1 317.6 588.2 315.8 592.2 313.7Z" fill="#3f469c" stroke="#2f3684" stroke-width="0.6"/>
<path d="M612.0 325.0C615.3 322.8 620.3 322.0 625.0 322.0C629.7 322.0 636.3 323.3 640.0 325.0C643.7 326.7 647.0 328.7 647.0 332.0C647.0 335.3 643.7 339.5 640.0 345.0C636.3 350.5 628.8 360.4 625.0 365.0C621.2 369.6 620.0 371.7 617.5 372.5C615.0 373.3 612.6 372.9 610.0 370.0C607.4 367.1 602.8 360.8 602.0 355.0C601.2 349.2 603.3 340.0 605.0 335.0C606.7 330.0 608.7 327.2 612.0 325.0Z" fill="#ececec"/>
<path d="M586.0 321.0C586.4 319.5 588.6 320.2 589.0 322.0C589.4 323.8 588.9 330.5 588.5 332.0C588.1 333.5 586.9 332.8 586.5 331.0C586.1 329.2 585.6 322.5 586.0 321.0Z" fill="#ececec"/>
<path d="M677.0 333.0C683.7 331.5 693.5 335.8 700.0 339.0C706.5 342.2 713.2 347.7 716.0 352.0C718.8 356.3 718.8 361.2 717.0 365.0C715.2 368.8 711.2 370.8 705.0 375.0C698.8 379.2 689.2 385.2 680.0 390.0C670.8 394.8 657.7 401.5 650.0 404.0C642.3 406.5 637.0 406.2 634.0 405.0C631.0 403.8 630.2 402.5 632.0 397.0C633.8 391.5 640.3 380.2 645.0 372.0C649.7 363.8 654.7 354.5 660.0 348.0C665.3 341.5 670.3 334.5 677.0 333.0Z" fill="rgba(255,255,255,0.05)" stroke="#2f3684" stroke-width="0.7"/>
<path d="M676.8 335.8C682.9 334.3 692.1 338.3 698.2 341.2C704.3 344.1 710.8 349.1 713.4 353.2C716.1 357.2 716.1 361.8 714.2 365.4C712.4 369.0 708.1 371.0 702.2 374.6C696.4 378.3 687.6 382.8 679.2 387.3C670.8 391.8 658.8 399.1 651.7 401.7C644.5 404.4 639.0 404.2 636.1 403.2C633.3 402.2 632.4 400.7 634.4 395.5C636.3 390.3 643.3 379.4 647.8 371.9C652.3 364.4 656.6 356.4 661.5 350.4C666.3 344.4 670.7 337.3 676.8 335.8Z" fill="#4852aa" stroke="#2f3684" stroke-width="0.6"/>
<path d="M660.0 349.5C663.0 348.7 665.1 353.8 668.0 360.0C670.9 366.2 679.7 380.7 677.5 387.0C675.3 393.3 662.2 395.4 655.0 398.0C647.8 400.6 636.5 404.7 634.0 402.5C631.5 400.3 637.3 391.2 640.0 385.0C642.7 378.8 646.7 370.9 650.0 365.0C653.3 359.1 657.0 350.3 660.0 349.5Z" fill="#ececec"/>
<path d="M588.0 354.0C590.2 354.0 593.0 358.0 594.0 362.0C595.0 366.0 595.0 374.3 594.0 378.0C593.0 381.7 590.0 384.3 588.0 384.0C586.0 383.7 583.2 379.7 582.0 376.0C580.8 372.3 580.0 365.7 581.0 362.0C582.0 358.3 585.8 354.0 588.0 354.0Z" fill="rgba(255,255,255,0.05)" stroke="#2f3684" stroke-width="0.7"/>
<path d="M588.0 356.8C589.5 356.8 591.5 361.0 592.2 364.1C592.9 367.3 593.1 372.9 592.4 375.7C591.7 378.6 589.4 381.5 588.0 381.2C586.5 380.9 584.7 376.8 583.8 373.9C583.0 371.0 582.2 366.9 582.9 364.0C583.6 361.2 586.4 356.8 588.0 356.8Z" fill="#454b9f" stroke="#2f3684" stroke-width="0.6"/>
<path d="M600.0 385.0C604.2 384.5 611.2 387.0 615.0 392.0C618.8 397.0 622.2 407.0 623.0 415.0C623.8 423.0 622.5 432.2 620.0 440.0C617.5 447.8 612.0 458.0 608.0 462.0C604.0 466.0 599.5 466.8 596.0 464.0C592.5 461.2 589.0 453.2 587.0 445.0C585.0 436.8 583.5 423.3 584.0 415.0C584.5 406.7 587.3 400.0 590.0 395.0C592.7 390.0 595.8 385.5 600.0 385.0Z" fill="rgba(255,255,255,0.05)" stroke="#2f3684" stroke-width="0.7"/>
<path d="M600.2 387.8C604.0 387.3 610.6 389.9 614.0 394.6C617.3 399.3 619.8 408.8 620.4 416.1C621.1 423.3 620.1 430.9 618.0 438.1C615.8 445.3 611.2 455.4 607.6 459.2C604.0 463.1 599.6 464.0 596.4 461.2C593.3 458.5 590.3 450.2 588.6 442.7C587.0 435.2 586.1 423.7 586.5 416.2C586.9 408.7 588.8 402.3 591.1 397.6C593.4 392.8 596.4 388.3 600.2 387.8Z" fill="#4754b8" stroke="#2f3684" stroke-width="0.6"/>
<path d="M598.0 389.0C601.5 387.7 605.3 389.3 608.0 392.0C610.7 394.7 612.8 399.5 614.0 405.0C615.2 410.5 615.3 419.6 615.0 425.0C614.7 430.4 616.2 436.2 612.0 437.5C607.8 438.8 594.4 435.9 590.0 433.0C585.6 430.1 586.0 425.5 585.5 420.0C585.0 414.5 584.9 405.2 587.0 400.0C589.1 394.8 594.5 390.3 598.0 389.0Z" fill="#ececec"/>
<path d="M590.0 435.0C593.7 433.0 609.3 434.7 612.0 438.0C614.7 441.3 608.7 451.7 606.0 455.0C603.3 458.3 598.7 458.8 596.0 458.0C593.3 457.2 591.0 453.8 590.0 450.0C589.0 446.2 586.3 437.0 590.0 435.0Z" fill="#3f62d2"/>
<path d="M714.0 388.0C718.3 388.5 716.3 393.0 716.0 400.0C715.7 407.0 714.7 420.0 712.0 430.0C709.3 440.0 705.3 451.3 700.0 460.0C694.7 468.7 686.7 477.0 680.0 482.0C673.3 487.0 666.7 490.0 660.0 490.0C653.3 490.0 645.3 486.7 640.0 482.0C634.7 477.3 630.3 467.7 628.0 462.0C625.7 456.3 624.8 452.5 626.0 448.0C627.2 443.5 629.3 440.5 635.0 435.0C640.7 429.5 650.8 421.3 660.0 415.0C669.2 408.7 681.0 401.5 690.0 397.0C699.0 392.5 709.7 387.5 714.0 388.0Z" fill="rgba(255,255,255,0.05)" stroke="#2f3684" stroke-width="0.7"/>
<path d="M712.2 390.2C716.4 390.6 714.4 395.1 713.9 401.9C713.4 408.7 712.0 421.3 709.3 430.7C706.6 440.1 702.7 450.3 697.7 458.4C692.7 466.5 685.6 474.4 679.5 479.3C673.3 484.1 666.9 487.2 660.6 487.3C654.4 487.4 646.7 484.2 641.7 479.8C636.7 475.4 632.7 466.1 630.5 460.8C628.4 455.4 627.6 451.8 628.8 447.6C630.0 443.3 632.4 440.4 637.8 435.4C643.2 430.4 652.6 423.5 661.2 417.5C669.7 411.6 680.4 404.1 688.9 399.6C697.4 395.0 708.1 389.8 712.2 390.2Z" fill="#4a58b8" stroke="#2f3684" stroke-width="0.6"/>
<clipPath id="c15"><path d="M713.0 390.0C717.0 390.2 714.5 393.3 714.0 400.0C713.5 406.7 712.7 420.2 710.0 430.0C707.3 439.8 703.2 450.7 698.0 459.0C692.8 467.3 685.3 475.2 679.0 480.0C672.7 484.8 666.3 487.5 660.0 487.5C653.7 487.5 646.0 484.4 641.0 480.0C636.0 475.6 632.2 466.3 630.0 461.0C627.8 455.7 627.0 452.2 628.0 448.0C629.0 443.8 630.7 441.2 636.0 436.0C641.3 430.8 651.0 423.2 660.0 417.0C669.0 410.8 681.2 403.5 690.0 399.0C698.8 394.5 709.0 389.8 713.0 390.0Z"/></clipPath>
<g clip-path="url(#c15)">
<path d="M620.0 445.5L695.0 434.0L720.0 440.0L620.0 460.0Z" fill="#3158cf"/>
<path d="M620.0 459.5L697.0 446.0L725.0 446.0L720.0 500.0L620.0 500.0Z" fill="url(#gFl)"/>
</g>
<path d="M600.0 478.0C603.6 475.0 605.3 474.2 612.0 477.0C618.7 479.8 630.0 489.0 640.0 495.0C650.0 501.0 664.0 507.7 672.0 513.0C680.0 518.3 686.7 523.0 688.0 527.0C689.3 531.0 686.0 533.8 680.0 537.0C674.0 540.2 661.2 543.9 652.0 546.0C642.8 548.1 633.0 550.3 625.0 549.5C617.0 548.7 609.3 545.9 604.0 541.0C598.7 536.1 595.2 527.7 593.0 520.0C590.8 512.3 589.3 502.0 590.5 495.0C591.7 488.0 596.4 481.0 600.0 478.0Z" fill="rgba(255,255,255,0.06)" stroke="#4a58b4" stroke-width="0.7"/>
<path d="M601.5 481.0C604.5 478.3 605.6 477.2 612.0 480.0C618.4 482.8 630.3 492.0 640.0 498.0C649.7 504.0 663.0 511.2 670.0 516.0C677.0 520.8 681.2 523.5 682.0 526.5C682.8 529.5 680.3 531.4 675.0 534.0C669.7 536.6 658.3 540.2 650.0 542.0C641.7 543.8 632.2 545.8 625.0 545.0C617.8 544.2 611.2 541.8 606.5 537.5C601.8 533.2 598.6 525.9 596.5 519.0C594.4 512.1 593.2 502.3 594.0 496.0C594.8 489.7 598.5 483.7 601.5 481.0Z" fill="url(#gFl)" stroke="#b8b8b0" stroke-width="0.5"/>
<path d="M757.0 389.0C761.5 389.0 767.8 389.0 775.0 395.0C782.2 401.0 792.8 415.0 800.0 425.0C807.2 435.0 814.7 447.5 818.0 455.0C821.3 462.5 821.3 464.2 820.0 470.0C818.7 475.8 815.8 483.7 810.0 490.0C804.2 496.3 795.0 502.7 785.0 508.0C775.0 513.3 760.8 518.7 750.0 522.0C739.2 525.3 727.0 528.3 720.0 528.0C713.0 527.7 710.3 524.7 708.0 520.0C705.7 515.3 704.8 508.3 706.0 500.0C707.2 491.7 710.2 483.3 715.0 470.0C719.8 456.7 729.5 432.5 735.0 420.0C740.5 407.5 744.3 400.2 748.0 395.0C751.7 389.8 752.5 389.0 757.0 389.0Z" fill="rgba(255,255,255,0.05)" stroke="#2f3684" stroke-width="0.7"/>
<path d="M757.1 391.8C761.5 391.8 767.6 391.9 774.4 397.7C781.2 403.6 791.2 417.3 798.0 427.0C804.8 436.6 812.0 448.3 815.2 455.4C818.4 462.5 818.5 464.1 817.2 469.7C815.9 475.2 813.1 482.7 807.5 488.7C801.9 494.6 793.2 500.5 783.7 505.5C774.1 510.6 760.9 515.9 750.5 519.2C740.1 522.6 728.3 525.8 721.5 525.6C714.7 525.4 712.1 522.5 709.9 517.9C707.7 513.4 707.0 506.5 708.3 498.4C709.6 490.4 713.1 482.3 717.8 469.6C722.5 456.9 731.3 434.4 736.4 422.4C741.5 410.4 745.1 402.9 748.5 397.8C752.0 392.7 752.8 391.8 757.1 391.8Z" fill="#4856b6" stroke="#2f3684" stroke-width="0.6"/>
<clipPath id="c17"><path d="M757.0 391.5C761.2 391.5 767.2 391.2 774.0 397.0C780.8 402.8 791.0 416.2 798.0 426.0C805.0 435.8 812.7 448.7 816.0 456.0C819.3 463.3 819.3 464.5 818.0 470.0C816.7 475.5 813.7 483.0 808.0 489.0C802.3 495.0 793.7 500.8 784.0 506.0C774.3 511.2 760.7 516.7 750.0 520.0C739.3 523.3 726.7 526.2 720.0 526.0C713.3 525.8 712.0 523.3 710.0 519.0C708.0 514.7 706.8 508.0 708.0 500.0C709.2 492.0 712.2 484.2 717.0 471.0C721.8 457.8 731.7 433.3 737.0 421.0C742.3 408.7 745.7 401.9 749.0 397.0C752.3 392.1 752.8 391.5 757.0 391.5Z"/></clipPath>
<g clip-path="url(#c17)">
<path d="M700.0 445.0L721.0 452.0L790.0 494.0L786.0 503.0L720.0 464.0L700.0 470.0Z" fill="#2f57cf"/>
<path d="M720.0 464.0L783.0 502.5L740.0 530.0L700.0 530.0L700.0 490.0Z" fill="url(#gFl)"/>
</g>
<path d="M739.0 427.0C738.0 425.5 741.7 416.6 744.0 413.0C746.3 409.4 751.1 406.0 753.0 405.5C754.9 405.0 756.0 407.2 755.5 410.0C755.0 412.8 752.8 419.2 750.0 422.0C747.2 424.8 740.0 428.5 739.0 427.0Z" fill="#ececec"/>
<path d="M775.0 399.0C775.5 397.3 778.9 401.5 781.0 405.0C783.1 408.5 787.0 416.5 787.5 420.0C788.0 423.5 785.6 426.8 784.0 426.0C782.4 425.2 779.5 419.5 778.0 415.0C776.5 410.5 774.5 400.7 775.0 399.0Z" fill="#ececec"/>
<path d="M761.0 440.0C761.3 438.7 764.3 439.5 768.0 442.0C771.7 444.5 779.8 451.2 783.0 455.0C786.2 458.8 787.8 463.8 787.0 465.0C786.2 466.2 781.5 464.5 778.0 462.0C774.5 459.5 768.8 453.7 766.0 450.0C763.2 446.3 760.7 441.3 761.0 440.0Z" fill="#ececec"/>
<path d="M804.0 435.0C804.0 433.7 806.0 435.7 807.0 438.0C808.0 440.3 810.0 447.7 810.0 449.0C810.0 450.3 808.0 448.3 807.0 446.0C806.0 443.7 804.0 436.3 804.0 435.0Z" fill="#ececec"/>
<rect x="7.6" y="4.0" width="3.2" height="3.2" fill="#3a3a3a"/>
<rect x="7.6" y="8.1" width="3.2" height="3.2" fill="#3a3a3a"/>
<rect x="7.6" y="12.2" width="3.2" height="3.2" fill="#3a3a3a"/>
<rect x="11.8" y="4.0" width="3.2" height="3.2" fill="#3a3a3a"/>
<rect x="11.8" y="8.1" width="3.2" height="3.2" fill="#3a3a3a"/>
<rect x="11.8" y="12.2" width="3.2" height="3.2" fill="#3a3a3a"/>
<rect x="16.0" y="4.0" width="3.2" height="3.2" fill="#3a3a3a"/>
<rect x="16.0" y="8.1" width="3.2" height="3.2" fill="#3a3a3a"/>
<rect x="16.0" y="12.2" width="3.2" height="3.2" fill="#3a3a3a"/>
<path d="M38 4.5 l5 0 l3 3 l0 7.5 l-8 0z" fill="#3c3c3c"/><path d="M43 4.5 l0 3 l3 0z" fill="#bbb"/>
<path d="M50 8.5 l4 0 l-2 2.6z" fill="#333"/>
<path d="M71.5 4.5 l9.5 0 l1.5 1.5 l0 9 l-11 0z" fill="#3c3c3c"/><rect x="74" y="5.5" width="5.5" height="3.2" fill="#d5d5d5"/><rect x="73.5" y="10.5" width="7" height="4.5" fill="#d5d5d5"/><rect x="74.8" y="11.3" width="2" height="3" fill="#3c3c3c"/>
<path d="M97.5 9 l5 -4 l0 2.5 q6 0 6.5 6 q-2 -3.2 -6.5 -3 l0 2.5z" fill="#3a3a3a"/><path d="M114 8.5 l4 0 l-2 2.6z" fill="#333"/>
<path d="M139 9 l-5 -4 l0 2.5 q-6 0 -6.5 6 q2 -3.2 6.5 -3 l0 2.5z" fill="#9a9a9a"/><path d="M144 8.5 l4 0 l-2 2.6z" fill="#8a8a8a"/>
<circle cx="1155.3" cy="10" r="4.6" fill="none" stroke="#333" stroke-width="1.1"/><path d="M1155.3 7 l0 3.2 l2.6 0" fill="none" stroke="#333" stroke-width="1"/>
<path d="M1233 8 l4.2 0 l-2.1 2.7z" fill="#333"/>
<circle cx="1258.5" cy="10" r="5.2" fill="#444"/><text x="1258.5" y="13" font-size="8.5" font-weight="bold" fill="#ddd" text-anchor="middle" font-family="Liberation Sans, sans-serif">?</text>
<path d="M1267 8 l4.2 0 l-2.1 2.7z" fill="#333"/>
<path d="M7.3 24.300 l5.200 -1.800 l5.200 1.800 l-0.600 6 l-4.600 2.300 l-4.600 -2.300z" fill="#6a6a6a" stroke="#d8d8d8" stroke-width="0.500"/><path d="M7.300 24.300 l5.200 2 l5.200 -2 l-5.200 -1.800z" fill="#a0a0a0"/><path d="M12.500 26.300 l0 6.300 l4.600 -2.300 l0.600 -6z" fill="#444"/>
<circle cx="112" cy="27.8" r="2.6" fill="#e8f0e8" stroke="#7fb08a" stroke-width="0.8"/>
<path d="M121.5 25 l5.5 5.5 m0 -5.5 l-5.5 5.5" stroke="#666" stroke-width="1.4"/>
<path d="M138 28 l7.5 0 m-3.75 -3.75 l0 7.5" stroke="#666" stroke-width="1.2"/>
<rect x="6.5" y="48.5" width="1" height="15" fill="#8e8e8e"/><rect x="8.7" y="48.5" width="1" height="15" fill="#8e8e8e"/>
<path d="M57 56.3 l3.6 0 l-1.8 2.4z" fill="#fff"/>
<defs><linearGradient id="ig1" x1="1" y1="0" x2="0" y2="1"><stop offset="0" stop-color="#fff"/><stop offset="1" stop-color="#bfc0d0"/></linearGradient><linearGradient id="ig2" x1="0" y1="0" x2="0" y2="1"><stop offset="0" stop-color="#eeeef4"/><stop offset="1" stop-color="#a4a6be"/></linearGradient><radialGradient id="ig3" cx="0.45" cy="0.4" r="0.6"><stop offset="0" stop-color="#e4b8f4"/><stop offset="1" stop-color="#a85ad0"/></radialGradient></defs>
<rect x="84.5" y="45.3" width="14.500" height="15.700" fill="url(#ig1)" stroke="#555" stroke-width="0.9"/><path d="M84.500 45 l0 16 l14.800 0" stroke="#333" stroke-width="1.500" fill="none"/><path d="M87.200 58.500 l0 -9 M87.200 58.500 l8 0" stroke="#888" stroke-width="0.700" fill="none"/><path d="M91.300 52.800 l6.800 -7.500 l2.300 1.900 l-6.800 7.500 l-3 1z" fill="#f2d440" stroke="#5a5030" stroke-width="0.700"/><path d="M98.800 55 l0 7.400 m-3.700 -3.700 l7.400 0" stroke="#444" stroke-width="3.400"/><path d="M98.800 55.600 l0 6.200 m-3.100 -3.100 l6.200 0" stroke="#fff" stroke-width="2"/>
<path d="M113.500 58.400 l10.500 0 M124 58.400 a7.600 5.600 0 0 0 0.300 -11.200" fill="none" stroke="#50506a" stroke-width="1.100"/><circle cx="113.500" cy="58.400" r="1.500" fill="#5a4fc0"/><circle cx="124" cy="58.400" r="1.500" fill="#5a4fc0"/><circle cx="124.300" cy="47.200" r="1.500" fill="#5a4fc0"/>
<rect x="141.500" y="47.500" width="18.500" height="11.500" fill="url(#ig2)" stroke="#44445a" stroke-width="1.100"/><circle cx="141.500" cy="59" r="1.400" fill="#5a4fc0"/><circle cx="160" cy="47.500" r="1.400" fill="#5a4fc0"/>
<path d="M173.500 47 l3 -3.500 l12 0 l0 14.500 l-3 4 l-12 0z" fill="#8fb0dc" stroke="#4a5a80" stroke-width="0.9" stroke-linejoin="round"/><rect x="174" y="47.500" width="11" height="14" fill="#b4ccec"/><path d="M173.500 47 l12 0 l0 15 M185.500 47 l3 -3.500" fill="none" stroke="#4a5a80" stroke-width="0.800"/><path d="M191.500 60.500 l0 -13" stroke="#333" stroke-width="1"/><path d="M189.600 48.200 l1.900 -3.500 l1.900 3.500z" fill="#333"/>
<rect x="202" y="43" width="17.500" height="18" rx="6" fill="url(#ig3)" stroke="#7a3aa8" stroke-width="0.9"/><path d="M202.500 49.500 q8.500 -1.500 17 0 M202.500 55 q8.500 -1.500 17 0 M207.500 43.500 q-1.500 9 0 17 M211.500 43 l0 18 M215.500 43.500 q1.500 9 0 17" stroke="#8a3ac0" stroke-width="0.800" fill="none"/><rect x="216.800" y="56" width="5.200" height="6.500" fill="#f0f0f0" stroke="#333" stroke-width="0.800"/><path d="M218.300 57.800 l2.400 1.500 l-2.400 1.500z" fill="#333"/>
<path d="M243 48 l3.500 -4 l13 0 l0 13.500 l-3.500 4.500 l-13 0z" fill="#7f9fd0" stroke="#4a5a80" stroke-width="0.9" stroke-linejoin="round"/><rect x="243.500" y="48.300" width="4" height="13.300" fill="#e4eaf4"/><rect x="247.500" y="48.300" width="8.500" height="13.300" fill="#a8c2e8"/><path d="M247.500 48 l0 14 M243 48 l13 0 l0 14 M256 48 l3.500 -4" fill="none" stroke="#4a5a80" stroke-width="0.800"/><path d="M255.500 52.900 l3.500 0 l0 -2.200 l4 3.200 l-4 3.200 l0 -2.200 l-3.500 0z" fill="#1a1a1a"/>
<path d="M284 48 l2.500 -3 l9.500 0 l0 7 l-2.500 3 l-9.500 0z" fill="#8aa8d8" stroke="#4a5878" stroke-width="0.800" stroke-linejoin="round"/><rect x="284.300" y="48.200" width="9.200" height="6.800" fill="#b0c6ea"/>
<path d="M284 55 l9.500 0 l2.500 -2.500 l9 0 l0 7 l-2.500 2.800 l-18.500 0z" fill="#b4b8c4" stroke="#5a6070" stroke-width="0.800" stroke-linejoin="round"/><rect x="284.300" y="55.200" width="9" height="6.800" fill="#e6e8ec"/><rect x="293.700" y="55.200" width="8.600" height="6.800" fill="#dadde4"/><path d="M293.600 55 l2.500 -2.500 l8.900 0 l-2.500 2.500z" fill="#f2f2f6"/><path d="M293.500 55 l0 7.200 M293.500 55 l9 0 l2.500 -2.500 M302.500 55 l0 7.200" fill="none" stroke="#5a6070" stroke-width="0.700"/>
<path d="M288 43.200 l0 7.200 m-3.600 -3.600 l7.200 0" stroke="#4a5878" stroke-width="3"/><path d="M288 43.900 l0 5.800 m-2.900 -2.900 l5.800 0" stroke="#fff" stroke-width="1.700"/>
<path d="M314 50 l5 -4 l3.500 2.500 l0 12 l-3.500 -2.500 l-5 4z" fill="#d0d4da" stroke="#5a6070" stroke-width="0.9" stroke-linejoin="round"/><path d="M323.500 48.500 l3.500 -2.500 l5 4 l0 12 l-5 -4 l-3.500 2.500z" fill="#b8bec8" stroke="#5a6070" stroke-width="0.9" stroke-linejoin="round"/><path d="M319 46 l0 12 M327 46 l0 12" stroke="#5a6070" stroke-width="0.600"/><rect x="321.800" y="50" width="2.400" height="7" fill="#e8dca0" stroke="#6a6040" stroke-width="0.500"/>
<path d="M362 48.500 l4.500 -4.500 l5 0 l0 14 l-4.500 4.500 l-5 0z" fill="#e4e4e4" stroke="#556" stroke-width="0.9"/><path d="M367 48.5 l0 14 M362 48.5 l5 0 l4.500 -4.500" fill="none" stroke="#556" stroke-width="0.8"/><path d="M367 48.5 l4.500 -4.500 l0 14 l-4.500 4.500z" fill="#4aa04a"/><path d="M376.500 48.500 l5.500 -4.500 l0 14 l-5.500 4.500z" fill="#f08848" stroke="#a0502a" stroke-width="0.7"/>
<rect x="419.500" y="53.300" width="19.500" height="4.200" rx="0.800" fill="#f0c030" stroke="#a07a10" stroke-width="0.9"/><path d="M419.500 49.500 l19.500 0 M419.500 47.800 l0 3.400 M439 47.800 l0 3.400" stroke="#444" stroke-width="0.9"/>
<rect x="467.500" y="43" width="19.500" height="19" fill="#b9cfe3" stroke="#666" stroke-width="1.100"/><circle cx="480.500" cy="48" r="2.300" fill="#f4f4f4"/><path d="M468 61.500 l0 -5 l7.500 -8 l5.500 6.500 l2.200 -2 l3.300 3.700 l0 4.800z" fill="#555e6a"/><path d="M475.500 48.500 l5.500 6.500 l2.200 -2 l3.300 3.700 l0 4.800 l-5 0z" fill="#7a8794"/>
<rect x="510.500" y="45" width="19" height="17" rx="2" fill="#efefef" stroke="#444" stroke-width="1.200"/><rect x="510.500" y="45" width="19" height="3.600" rx="1.500" fill="#555"/><rect x="513.500" y="50.500" width="13" height="8.500" fill="#444"/><path d="M516 59 l2 -3 l4 0 l2 3z" fill="#6a8ac0"/><rect x="519" y="51.500" width="2" height="3" fill="#aac"/>
<rect x="556.500" y="44.500" width="15" height="13" fill="#ededed" stroke="#666" stroke-width="0.9"/><rect x="556.500" y="44.500" width="15" height="3" fill="#777"/><path d="M559 51.500 l2 1.200 l-2 1.200 M562 54 l3 0" stroke="#555" stroke-width="0.7" fill="none"/>
<line x1="573.50" y1="58.00" x2="575.90" y2="58.00" stroke="#7878d8" stroke-width="1.9"/><line x1="572.91" y1="59.41" x2="574.61" y2="61.11" stroke="#7878d8" stroke-width="1.9"/><line x1="571.50" y1="60.00" x2="571.50" y2="62.40" stroke="#7878d8" stroke-width="1.9"/><line x1="570.09" y1="59.41" x2="568.39" y2="61.11" stroke="#7878d8" stroke-width="1.9"/><line x1="569.50" y1="58.00" x2="567.10" y2="58.00" stroke="#7878d8" stroke-width="1.9"/><line x1="570.09" y1="56.59" x2="568.39" y2="54.89" stroke="#7878d8" stroke-width="1.9"/><line x1="571.50" y1="56.00" x2="571.50" y2="53.60" stroke="#7878d8" stroke-width="1.9"/><line x1="572.91" y1="56.59" x2="574.61" y2="54.89" stroke="#7878d8" stroke-width="1.9"/><circle cx="571.5" cy="58.0" r="2.9" fill="#7878d8"/><circle cx="571.5" cy="58.0" r="1.5" fill="#f0f0fa"/>
<rect x="602" y="40" width="26" height="26.500" fill="#4c7aa6"/><rect x="606" y="43.500" width="14" height="9" fill="none" stroke="#4a9a4a" stroke-width="1.300"/><path d="M618.500 50 l0 10 l2.300 -2.200 l1.700 3.700 l1.600 -0.700 l-1.700 -3.600 l3.100 -0.200z" fill="#fff" stroke="#222" stroke-width="0.7"/>
<path d="M132.0 71.3 l3.6 0 l-1.8 2.5z" fill="#333"/>
<path d="M208.0 71.3 l3.6 0 l-1.8 2.5z" fill="#333"/>
<path d="M265.5 71.3 l3.6 0 l-1.8 2.5z" fill="#333"/>
<path d="M324.0 71.3 l3.6 0 l-1.8 2.5z" fill="#333"/>
<path d="M392.0 71.3 l3.6 0 l-1.8 2.5z" fill="#333"/>
<path d="M443.5 71.3 l3.6 0 l-1.8 2.5z" fill="#333"/>
<path d="M488.0 71.3 l3.6 0 l-1.8 2.5z" fill="#333"/>
<path d="M529.3 71.3 l3.6 0 l-1.8 2.5z" fill="#333"/>
<path d="M580.5 71.3 l3.6 0 l-1.8 2.5z" fill="#333"/>
<path d="M627.0 71.3 l3.6 0 l-1.8 2.5z" fill="#333"/>
<path d="M9.5 90.3 l-3.2 -2.2 l3.2 -2.2z M13.3 90.3 l-3.2 -2.2 l3.2 -2.2z" fill="#333"/>
<circle cx="191.500" cy="88" r="2.700" fill="#222"/><rect x="190" y="87.500" width="3" height="1" fill="#ddd"/>
<rect x="199.300" y="83" width="0.800" height="10" fill="#888"/><rect x="201" y="83" width="0.800" height="10" fill="#eee"/>
<circle cx="191.500" cy="675.300" r="2.800" fill="#222"/><path d="M190 675.300 l3 0 m-1.500 -1.500 l0 3" stroke="#ddd" stroke-width="0.9"/>
<rect x="199.300" y="670" width="0.800" height="10.500" fill="#888"/><rect x="201" y="670" width="0.800" height="10.500" fill="#eee"/>
<path d="M14.0 109.8 l7.5 0 l0 -7.5z" fill="#555" stroke="#333" stroke-width="0.8" stroke-linejoin="round"/><path d="M17.2 108.6 l3 0 l0 -3z" fill="#ddd"/>
<path d="M35.0 107.0 a3 3 0 1 1 3.8 0 l-0.5 1.5 l-2.8 0z" fill="#f5e04a" stroke="#8a7a10" stroke-width="0.5"/><rect x="35.6" y="108.6" width="2.6" height="2.3" fill="#5a5a5a"/>
<path d="M49.500 101.800 l4 0 l2 2 l0 7 l-6 0z" fill="#f4f4f4"/><rect x="53.500" y="106.500" width="4.500" height="4.500" fill="#f4f4f4" stroke="#808080" stroke-width="0.500"/>
<circle cx="188.300" cy="106.500" r="4" fill="#f4f4f4" stroke="#333" stroke-width="0.9"/><circle cx="188.300" cy="106.500" r="1.700" fill="#222"/>
<path d="M26.8 118.2 l0 8 l5.5 -4z" fill="#f4f4f4" stroke="#3a3a3a" stroke-width="1.15" stroke-linejoin="round"/>
<path d="M26.8 134.2 l0 8 l5.5 -4z" fill="#f4f4f4" stroke="#3a3a3a" stroke-width="1.15" stroke-linejoin="round"/>
<path d="M26.8 150.2 l0 8 l5.5 -4z" fill="#f4f4f4" stroke="#3a3a3a" stroke-width="1.15" stroke-linejoin="round"/>
<path d="M26.8 198.2 l0 8 l5.5 -4z" fill="#f4f4f4" stroke="#3a3a3a" stroke-width="1.15" stroke-linejoin="round"/>
<path d="M26.8 214.2 l0 8 l5.5 -4z" fill="#f4f4f4" stroke="#3a3a3a" stroke-width="1.15" stroke-linejoin="round"/>
<path d="M26.8 230.2 l0 8 l5.5 -4z" fill="#f4f4f4" stroke="#3a3a3a" stroke-width="1.15" stroke-linejoin="round"/>
<path d="M26.0 174.3 l7.5 0 l0 -7.5z" fill="#555" stroke="#333" stroke-width="0.8" stroke-linejoin="round"/><path d="M29.2 173.1 l3 0 l0 -3z" fill="#ddd"/>
<line x1="48.00" y1="122.80" x2="50.40" y2="122.80" stroke="#3a3a3a" stroke-width="1.9"/><line x1="47.27" y1="124.57" x2="48.96" y2="126.26" stroke="#3a3a3a" stroke-width="1.9"/><line x1="45.50" y1="125.30" x2="45.50" y2="127.70" stroke="#3a3a3a" stroke-width="1.9"/><line x1="43.73" y1="124.57" x2="42.04" y2="126.26" stroke="#3a3a3a" stroke-width="1.9"/><line x1="43.00" y1="122.80" x2="40.60" y2="122.80" stroke="#3a3a3a" stroke-width="1.9"/><line x1="43.73" y1="121.03" x2="42.04" y2="119.34" stroke="#3a3a3a" stroke-width="1.9"/><line x1="45.50" y1="120.30" x2="45.50" y2="117.90" stroke="#3a3a3a" stroke-width="1.9"/><line x1="47.27" y1="121.03" x2="48.96" y2="119.34" stroke="#3a3a3a" stroke-width="1.9"/><circle cx="45.5" cy="122.8" r="3.4" fill="#3a3a3a"/><circle cx="45.5" cy="122.8" r="1.7" fill="#cfcfcf"/>
<path d="M41.0 143.0 l0 -8 l3.5 0 l1 1.2 l5 0 l0 6.8z" fill="#f2f2f2" stroke="#555" stroke-width="0.8" stroke-linejoin="round"/>
<path d="M44.0 155.5 a3 3 0 1 1 3.8 0 l-0.5 1.5 l-2.8 0z" fill="#c9d6f2" stroke="#5a6a9a" stroke-width="0.5"/><rect x="44.6" y="157.1" width="2.6" height="2.3" fill="#5a5a5a"/>
<path d="M57.5 159.0 l0 -8 l3.5 0 l1 1.2 l5 0 l0 6.8z" fill="#f2f2f2" stroke="#555" stroke-width="0.8" stroke-linejoin="round"/>
<path d="M44.0 171.5 a3 3 0 1 1 3.8 0 l-0.5 1.5 l-2.8 0z" fill="#f5e04a" stroke="#8a7a10" stroke-width="0.5"/><rect x="44.6" y="173.1" width="2.6" height="2.3" fill="#5a5a5a"/>
<path d="M57.5 175.0 l0 -8 l3.5 0 l1 1.2 l5 0 l0 6.8z" fill="#f2f2f2" stroke="#555" stroke-width="0.8" stroke-linejoin="round"/>
<path d="M55 175.500 l50 0" stroke="#555" stroke-width="0.800" stroke-dasharray="2 1.500"/>
<path d="M56.5 187.5 a3 3 0 1 1 3.8 0 l-0.5 1.5 l-2.8 0z" fill="#f5e04a" stroke="#8a7a10" stroke-width="0.5"/><rect x="57.1" y="189.1" width="2.6" height="2.3" fill="#5a5a5a"/>
<path d="M71.500 183.500 q0 -1.800 3.700 -1.800 q3.700 0 3.700 1.800 l0 6.500 q0 1.800 -3.700 1.800 q-3.700 0 -3.700 -1.800z" fill="#f4f4f4" stroke="#cfd8e8" stroke-width="0.500"/><ellipse cx="75.200" cy="183.600" rx="3.700" ry="1.500" fill="#dfe6f2"/>
<path d="M44.0 203.5 a3 3 0 1 1 3.8 0 l-0.5 1.5 l-2.8 0z" fill="#f5e04a" stroke="#8a7a10" stroke-width="0.5"/><rect x="44.6" y="205.1" width="2.6" height="2.3" fill="#5a5a5a"/>
<path d="M57.5 207.0 l0 -8 l3.5 0 l1 1.2 l5 0 l0 6.8z" fill="#f2f2f2" stroke="#555" stroke-width="0.8" stroke-linejoin="round"/>
<path d="M44.0 219.5 a3 3 0 1 1 3.8 0 l-0.5 1.5 l-2.8 0z" fill="#f5e04a" stroke="#8a7a10" stroke-width="0.5"/><rect x="44.6" y="221.1" width="2.6" height="2.3" fill="#5a5a5a"/>
<path d="M57.5 223.0 l0 -8 l3.5 0 l1 1.2 l5 0 l0 6.8z" fill="#f2f2f2" stroke="#555" stroke-width="0.8" stroke-linejoin="round"/>
<path d="M47.5 235.5 a3 3 0 1 1 3.8 0 l-0.5 1.5 l-2.8 0z" fill="#f5e04a" stroke="#8a7a10" stroke-width="0.5"/><rect x="48.1" y="237.1" width="2.6" height="2.3" fill="#5a5a5a"/>
<path d="M60.500 231 l2.500 -2.500 l7.500 0 l0 8 l-2.500 2.500 l-7.500 0z" fill="#f0f0f0" stroke="#555" stroke-width="0.800" stroke-linejoin="round"/><path d="M60.500 231 l7.500 0 l0 8 M68 231 l2.500 -2.500" fill="none" stroke="#555" stroke-width="0.700"/>
<path d="M176.800 184.700 l0 9 l2 -1.900 l1.500 3.400 l1.400 -0.600 l-1.500 -3.300 l2.800 -0.100z" fill="#111" stroke="#fff" stroke-width="0.500"/>
<defs><radialGradient id="cs"><stop offset="0" stop-color="#cfcfcf"/><stop offset="1" stop-color="#ebebeb" stop-opacity="0"/></radialGradient><linearGradient id="cb" x1="0" y1="0" x2="1" y2="1"><stop offset="0" stop-color="#dedede"/><stop offset="1" stop-color="#ededed"/></linearGradient></defs>
<ellipse cx="1236" cy="97" rx="27" ry="8" fill="url(#cs)"/>
<path d="M1216.1 60.3 L1229.7 65.5 L1229.7 98.3 L1217.2 90Z" fill="#d9d9d9"/>
<path d="M1229.7 65.5 L1259.9 62.4 L1259.4 94.7 L1229.7 98.3Z" fill="url(#cb)"/>
<path d="M1216.1 60.3 L1241.7 57.2 L1259.9 62.4 L1229.7 65.5Z" fill="#e6e6e6"/>
<path d="M1216.1 60.3 L1241.7 57.2 L1259.9 62.4 M1216.1 60.3 L1229.7 65.5 L1259.9 62.4 M1229.7 65.5 L1229.7 98.3 M1216.1 60.3 L1217.2 90" fill="none" stroke="#aaa" stroke-width="0.7" stroke-dasharray="2.2 1.6"/>
<text x="1245" y="85.5" font-size="8.6" font-weight="bold" fill="#9a9a9a" text-anchor="middle" transform="rotate(-6 1245 82)" textLength="16.5" lengthAdjust="spacingAndGlyphs">BACK</text>
<text x="0" y="0" font-size="4.6" font-weight="bold" fill="#a8a8a8" text-anchor="middle" transform="translate(1223 82) rotate(24) scale(0.75 1.7)">LEFT</text>
<text x="1238" y="62.5" font-size="4" fill="#c4c4c4" text-anchor="middle" transform="rotate(-4 1238 62)">TOP</text>
<path d="M1261 50.5 l0 44.2" stroke="#a8f4a8" stroke-width="3" opacity="0.6" stroke-linecap="round"/>
<path d="M1261 50.5 l0 44.2" stroke="#74ea74" stroke-width="1.3" stroke-linecap="round"/>
<path d="M1225 102.3 L1259.4 94.7" stroke="#d8506e" stroke-width="1.5"/>
<text x="1219.5" y="105.8" font-size="7" fill="#e0587a" text-anchor="middle">X</text>
<rect x="558.500" y="668" width="95.500" height="15.500" fill="#cdcdcd"/><rect x="659" y="668" width="62" height="15.500" fill="#cdcdcd"/>
<path d="M565 671 l0 10 M560.500 676 l9 0" stroke="#444" stroke-width="1.200"/><ellipse cx="565" cy="676" rx="4.300" ry="2" fill="none" stroke="#444" stroke-width="0.800"/><path d="M573.500 675 l3.400 0 l-1.700 2.200z" fill="#333"/>
<rect x="582.500" y="673.500" width="10" height="7" fill="#e6e6e6" stroke="#444" stroke-width="1"/><path d="M584 672 l7 0 M585 677 l5 0" stroke="#444" stroke-width="0.900"/>
<path d="M601 681 q-2 -2.500 -2.500 -5 l1.500 -0.500 l1 2 l0 -5.500 l1.300 0 l0 -1 l1.300 0 l0 0.600 l1.300 0 l0 1 l1.300 0.300 l0 5.600 q0 1.500 -1 2.500z" fill="#f0f0f0" stroke="#444" stroke-width="0.800"/>
<circle cx="620" cy="674.500" r="3.300" fill="#eee" stroke="#444" stroke-width="1.100"/><path d="M622.500 677 l3.500 3.500" stroke="#444" stroke-width="1.600"/><path d="M625 671 l0 3 m-1.500 -1.500 l3 0" stroke="#444" stroke-width="0.700"/>
<rect x="634.500" y="670.500" width="8" height="8" fill="none" stroke="#888" stroke-width="0.600" stroke-dasharray="1.200 1"/><circle cx="639" cy="674.500" r="3.500" fill="#eee" stroke="#444" stroke-width="1.100"/><path d="M641.500 677.500 l3.500 3.500" stroke="#444" stroke-width="1.600"/><path d="M648.500 675 l3.400 0 l-1.700 2.200z" fill="#333"/>
<rect x="661.500" y="670.500" width="10.500" height="7.500" fill="#6a8ac8" stroke="#445" stroke-width="0.900"/><rect x="663" y="672" width="7.500" height="4.500" fill="#b8ccf0"/><path d="M665 680.500 l4 0 M667 678 l0 2.500" stroke="#445" stroke-width="1"/><path d="M674.500 675 l3.400 0 l-1.700 2.200z" fill="#333"/>
<rect x="682" y="670.500" width="11" height="10" fill="#d8d8d8" stroke="#555" stroke-width="0.900"/><path d="M684.200 670.500 l0 10 M686.400 670.500 l0 10 M688.600 670.500 l0 10 M690.800 670.500 l0 10" stroke="#666" stroke-width="0.800"/><path d="M695.500 675 l3.400 0 l-1.700 2.200z" fill="#333"/>
<rect x="703" y="671.500" width="10" height="8" fill="#9ab4e4" stroke="#3a4a7a" stroke-width="0.900"/><path d="M708 671.500 l0 8 M703 675.500 l10 0" stroke="#3a4a7a" stroke-width="0.900"/><path d="M716 675 l3.400 0 l-1.700 2.200z" fill="#333"/>
<rect x="1263" y="686" width="17" height="34" fill="#c8c8c8"/>
<line x1="1274.30" y1="700.00" x2="1276.70" y2="700.00" stroke="#444" stroke-width="1.9"/><line x1="1273.63" y1="701.63" x2="1275.32" y2="703.32" stroke="#444" stroke-width="1.9"/><line x1="1272.00" y1="702.30" x2="1272.00" y2="704.70" stroke="#444" stroke-width="1.9"/><line x1="1270.37" y1="701.63" x2="1268.68" y2="703.32" stroke="#444" stroke-width="1.9"/><line x1="1269.70" y1="700.00" x2="1267.30" y2="700.00" stroke="#444" stroke-width="1.9"/><line x1="1270.37" y1="698.37" x2="1268.68" y2="696.68" stroke="#444" stroke-width="1.9"/><line x1="1272.00" y1="697.70" x2="1272.00" y2="695.30" stroke="#444" stroke-width="1.9"/><line x1="1273.63" y1="698.37" x2="1275.32" y2="696.68" stroke="#444" stroke-width="1.9"/><circle cx="1272.0" cy="700.0" r="3.2" fill="#444"/><circle cx="1272.0" cy="700.0" r="1.6" fill="#c8c8c8"/>
<path d="M8 696 l1.500 0 l0 9.500 l-1.500 0z M15.500 696 l0 9.500 l-6 -4.750z" fill="#333"/>
<path d="M29.500 696.500 l0 8.500 l-5.500 -4.250z M30.500 699 l1.800 0 l0 3.500 l-1.800 0z" fill="#333"/>
<path d="M40.500 695.500 l0 10.500 l8 -5.250z" fill="#333"/>
<path d="M58.500 696.500 l0 8.500 l5.500 -4.250z M55.500 699 l1.800 0 l0 3.500 l-1.800 0z" fill="#333"/>
<path d="M74 696 l0 9.500 l6 -4.750z M80.500 696 l1.500 0 l0 9.500 l-1.500 0z" fill="#333"/>
<rect x="96.500" y="690" width="668" height="3.600" fill="#f3cb74"/>
<path d="M113.5 693 l2.2 -2.800 M117 693 l2.200 -2.800 M120.500 693 l2.200 -2.800" stroke="#5a3010" stroke-width="1.100"/>
<path d="M103.300 712 l658 0" stroke="#444" stroke-width="1"/>
<path d="M103.3 709 l0 3" stroke="#444" stroke-width="1"/>
<rect x="97.8" y="696.5" width="9.800" height="9.800" fill="#f2f2f6" stroke="#22264a" stroke-width="1.300"/><path d="M101.8 700.0 l3.500 -3.500 l2.500 0 l0 2.500 l-3.500 3.500z" fill="#f0d820"/><path d="M99.8 704.0 l0 -5 M99.8 704.0 l5 0 M99.8 704.0 l3.500 -3.500" stroke="#22264a" stroke-width="1.100" fill="none"/>
<path d="M119.2 709 l0 3" stroke="#444" stroke-width="1"/>
<path d="M113.2 698.0 l2 -2 l5 0 l0 9 l-2 2 l-5 0z" fill="#bcc8ee" stroke="#4a5a90" stroke-width="0.800"/><path d="M113.2 698.0 l5 0 l0 9 M118.2 698.0 l2 -2" fill="none" stroke="#3a4a80" stroke-width="0.700"/><path d="M122.7 706.5 l0 -9" stroke="#333" stroke-width="0.900"/><path d="M121.2 698.5 l1.500 -2.500 l1.500 2.500z" fill="#333"/>
<path d="M135.2 709 l0 3" stroke="#444" stroke-width="1"/>
<path d="M129.2 699.0 l2 -2 l8 0 l0 8 l-2 2 l-8 0z" fill="#b8c8e4" stroke="#3a4a80" stroke-width="0.800"/><rect x="131.2" y="702.0" width="4" height="4" fill="#667" stroke="#334" stroke-width="0.500"/>
<path d="M151.1 709 l0 3" stroke="#444" stroke-width="1"/>
<path d="M145.1 699.5 l3 -3 l0 9 l-3 3z" fill="#ddd" stroke="#555" stroke-width="0.600"/><path d="M148.3 699.5 l3 -3 l0 9 l-3 3z" fill="#4aa04a" stroke="#2a602a" stroke-width="0.500"/><path d="M152.6 699.5 l3 -3 l0 9 l-3 3z" fill="#f08848" stroke="#a0502a" stroke-width="0.500"/>
<path d="M167.0 709 l0 3" stroke="#444" stroke-width="1"/>
<rect x="161.5" y="696.5" width="9.800" height="9.800" fill="#f2f2f6" stroke="#22264a" stroke-width="1.300"/><path d="M165.5 700.0 l3.500 -3.500 l2.500 0 l0 2.500 l-3.500 3.500z" fill="#f0d820"/><path d="M163.5 704.0 l0 -5 M163.5 704.0 l5 0 M163.5 704.0 l3.500 -3.500" stroke="#22264a" stroke-width="1.100" fill="none"/>
<path d="M182.9 709 l0 3" stroke="#444" stroke-width="1"/>
<path d="M176.9 698.0 l2 -2 l5 0 l0 9 l-2 2 l-5 0z" fill="#bcc8ee" stroke="#4a5a90" stroke-width="0.800"/><path d="M176.9 698.0 l5 0 l0 9 M181.9 698.0 l2 -2" fill="none" stroke="#3a4a80" stroke-width="0.700"/><path d="M186.4 706.5 l0 -9" stroke="#333" stroke-width="0.900"/><path d="M184.9 698.5 l1.500 -2.500 l1.500 2.500z" fill="#333"/>
<path d="M198.9 709 l0 3" stroke="#444" stroke-width="1"/>
<rect x="193.4" y="696.5" width="9.800" height="9.800" fill="#f2f2f6" stroke="#22264a" stroke-width="1.300"/><path d="M197.4 700.0 l3.500 -3.500 l2.500 0 l0 2.500 l-3.500 3.500z" fill="#f0d820"/><path d="M195.4 704.0 l0 -5 M195.4 704.0 l5 0 M195.4 704.0 l3.500 -3.500" stroke="#22264a" stroke-width="1.100" fill="none"/>
<path d="M214.8 709 l0 3" stroke="#444" stroke-width="1"/>
<path d="M214.3 696.0 l0 11 M208.8 701.5 l11 0" stroke="#333" stroke-width="1.100"/><path d="M212.3 698.5 l2 -2.500 l2 2.500z M212.3 704.5 l2 2.500 l2 -2.500z M211.3 699.5 l-2.500 2 l2.500 2z M217.3 699.5 l2.500 2 l-2.500 2z" fill="#333"/>
<path d="M230.7 709 l0 3" stroke="#444" stroke-width="1"/>
<rect x="225.2" y="696.5" width="9.800" height="9.800" fill="#f2f2f6" stroke="#22264a" stroke-width="1.300"/><path d="M229.2 700.0 l3.500 -3.500 l2.500 0 l0 2.500 l-3.500 3.500z" fill="#f0d820"/><path d="M227.2 704.0 l0 -5 M227.2 704.0 l5 0 M227.2 704.0 l3.500 -3.500" stroke="#22264a" stroke-width="1.100" fill="none"/>
<path d="M246.7 709 l0 3" stroke="#444" stroke-width="1"/>
<path d="M240.7 698.0 l2 -2 l5 0 l0 9 l-2 2 l-5 0z" fill="#bcc8ee" stroke="#4a5a90" stroke-width="0.800"/><path d="M240.7 698.0 l5 0 l0 9 M245.7 698.0 l2 -2" fill="none" stroke="#3a4a80" stroke-width="0.700"/><path d="M250.2 706.5 l0 -9" stroke="#333" stroke-width="0.900"/><path d="M248.7 698.5 l1.500 -2.500 l1.500 2.500z" fill="#333"/>
<path d="M262.6 709 l0 3" stroke="#444" stroke-width="1"/>
<path d="M256.6 702.0 l3.500 -4.500 l7.500 0 l-2 5 l-3.500 4 l-7 0z" fill="#9ab4e8" stroke="#34457f" stroke-width="0.800"/><path d="M258.1 702.0 l7 0 l3 -4.500" fill="none" stroke="#34457f" stroke-width="0.600"/>
<path d="M278.5 709 l0 3" stroke="#444" stroke-width="1"/>
<path d="M272.5 705.5 q0 -8 7 -9.500 q4.500 1 4.500 6 l0 3.500 l-3.500 2.500 l-8 0z" fill="#e8ecf4" stroke="#34457f" stroke-width="0.800"/><path d="M276.0 698.5 q3.500 0 5 3.500 l0 3.500" fill="none" stroke="#34457f" stroke-width="0.700"/>
<path d="M294.5 709 l0 3" stroke="#444" stroke-width="1"/>
<rect x="289.0" y="696.5" width="9.800" height="9.800" fill="#f2f2f6" stroke="#22264a" stroke-width="1.300"/><path d="M293.0 700.0 l3.500 -3.500 l2.500 0 l0 2.500 l-3.500 3.500z" fill="#f0d820"/><path d="M291.0 704.0 l0 -5 M291.0 704.0 l5 0 M291.0 704.0 l3.500 -3.500" stroke="#22264a" stroke-width="1.100" fill="none"/>
<path d="M310.4 709 l0 3" stroke="#444" stroke-width="1"/>
<rect x="304.9" y="696.5" width="9.800" height="9.800" fill="#f2f2f6" stroke="#22264a" stroke-width="1.300"/><path d="M308.9 700.0 l3.500 -3.500 l2.500 0 l0 2.500 l-3.500 3.500z" fill="#f0d820"/><path d="M306.9 704.0 l0 -5 M306.9 704.0 l5 0 M306.9 704.0 l3.500 -3.500" stroke="#22264a" stroke-width="1.100" fill="none"/>
<path d="M326.3 709 l0 3" stroke="#444" stroke-width="1"/>
<path d="M320.3 698.0 l2 -2 l5 0 l0 9 l-2 2 l-5 0z" fill="#bcc8ee" stroke="#4a5a90" stroke-width="0.800"/><path d="M320.3 698.0 l5 0 l0 9 M325.3 698.0 l2 -2" fill="none" stroke="#3a4a80" stroke-width="0.700"/><path d="M329.8 706.5 l0 -9" stroke="#333" stroke-width="0.900"/><path d="M328.3 698.5 l1.500 -2.500 l1.500 2.500z" fill="#333"/>
<path d="M342.2 709 l0 3" stroke="#444" stroke-width="1"/>
<path d="M336.2 699.5 l3 -3 l0 9 l-3 3z" fill="#ddd" stroke="#555" stroke-width="0.600"/><path d="M339.4 699.5 l3 -3 l0 9 l-3 3z" fill="#4aa04a" stroke="#2a602a" stroke-width="0.500"/><path d="M343.8 699.5 l3 -3 l0 9 l-3 3z" fill="#f08848" stroke="#a0502a" stroke-width="0.500"/>
<path d="M358.2 709 l0 3" stroke="#444" stroke-width="1"/>
<rect x="352.7" y="696.5" width="9.800" height="9.800" fill="#f2f2f6" stroke="#22264a" stroke-width="1.300"/><path d="M356.7 700.0 l3.500 -3.500 l2.500 0 l0 2.500 l-3.500 3.500z" fill="#f0d820"/><path d="M354.7 704.0 l0 -5 M354.7 704.0 l5 0 M354.7 704.0 l3.500 -3.500" stroke="#22264a" stroke-width="1.100" fill="none"/>
<path d="M374.1 709 l0 3" stroke="#444" stroke-width="1"/>
<rect x="368.6" y="696.5" width="9.800" height="9.800" fill="#f2f2f6" stroke="#22264a" stroke-width="1.300"/><path d="M372.6 700.0 l3.500 -3.500 l2.500 0 l0 2.500 l-3.500 3.500z" fill="#f0d820"/><path d="M370.6 704.0 l0 -5 M370.6 704.0 l5 0 M370.6 704.0 l3.500 -3.500" stroke="#22264a" stroke-width="1.100" fill="none"/>
<path d="M390.0 709 l0 3" stroke="#444" stroke-width="1"/>
<path d="M384.0 698.0 l2 -2 l5 0 l0 9 l-2 2 l-5 0z" fill="#bcc8ee" stroke="#4a5a90" stroke-width="0.800"/><path d="M384.0 698.0 l5 0 l0 9 M389.0 698.0 l2 -2" fill="none" stroke="#3a4a80" stroke-width="0.700"/><path d="M393.5 706.5 l0 -9" stroke="#333" stroke-width="0.900"/><path d="M392.0 698.5 l1.500 -2.500 l1.500 2.500z" fill="#333"/>
<path d="M406.0 709 l0 3" stroke="#444" stroke-width="1"/>
<rect x="400.5" y="696.5" width="9.800" height="9.800" fill="#f2f2f6" stroke="#22264a" stroke-width="1.300"/><path d="M404.5 700.0 l3.500 -3.500 l2.500 0 l0 2.500 l-3.500 3.500z" fill="#f0d820"/><path d="M402.5 704.0 l0 -5 M402.5 704.0 l5 0 M402.5 704.0 l3.500 -3.500" stroke="#22264a" stroke-width="1.100" fill="none"/>
<path d="M421.9 709 l0 3" stroke="#444" stroke-width="1"/>
<path d="M415.9 698.0 l2 -2 l5 0 l0 9 l-2 2 l-5 0z" fill="#bcc8ee" stroke="#4a5a90" stroke-width="0.800"/><path d="M415.9 698.0 l5 0 l0 9 M420.9 698.0 l2 -2" fill="none" stroke="#3a4a80" stroke-width="0.700"/><path d="M425.4 706.5 l0 -9" stroke="#333" stroke-width="0.900"/><path d="M423.9 698.5 l1.500 -2.500 l1.500 2.500z" fill="#333"/>
<path d="M437.8 709 l0 3" stroke="#444" stroke-width="1"/>
<rect x="432.3" y="696.5" width="9.800" height="9.800" fill="#f2f2f6" stroke="#22264a" stroke-width="1.300"/><path d="M436.3 700.0 l3.500 -3.500 l2.500 0 l0 2.500 l-3.500 3.500z" fill="#f0d820"/><path d="M434.3 704.0 l0 -5 M434.3 704.0 l5 0 M434.3 704.0 l3.500 -3.500" stroke="#22264a" stroke-width="1.100" fill="none"/>
<path d="M453.8 709 l0 3" stroke="#444" stroke-width="1"/>
<path d="M447.8 698.0 l2 -2 l5 0 l0 9 l-2 2 l-5 0z" fill="#bcc8ee" stroke="#4a5a90" stroke-width="0.800"/><path d="M447.8 698.0 l5 0 l0 9 M452.8 698.0 l2 -2" fill="none" stroke="#3a4a80" stroke-width="0.700"/><path d="M457.3 706.5 l0 -9" stroke="#333" stroke-width="0.900"/><path d="M455.8 698.5 l1.500 -2.500 l1.500 2.500z" fill="#333"/>
<path d="M469.7 709 l0 3" stroke="#444" stroke-width="1"/>
<rect x="464.2" y="696.5" width="9.800" height="9.800" fill="#f2f2f6" stroke="#22264a" stroke-width="1.300"/><path d="M468.2 700.0 l3.500 -3.500 l2.500 0 l0 2.500 l-3.500 3.500z" fill="#f0d820"/><path d="M466.2 704.0 l0 -5 M466.2 704.0 l5 0 M466.2 704.0 l3.500 -3.500" stroke="#22264a" stroke-width="1.100" fill="none"/>
<path d="M485.6 709 l0 3" stroke="#444" stroke-width="1"/>
<path d="M479.6 698.0 l2 -2 l5 0 l0 9 l-2 2 l-5 0z" fill="#bcc8ee" stroke="#4a5a90" stroke-width="0.800"/><path d="M479.6 698.0 l5 0 l0 9 M484.6 698.0 l2 -2" fill="none" stroke="#3a4a80" stroke-width="0.700"/><path d="M489.1 706.5 l0 -9" stroke="#333" stroke-width="0.900"/><path d="M487.6 698.5 l1.500 -2.500 l1.500 2.500z" fill="#333"/>
<path d="M501.6 709 l0 3" stroke="#444" stroke-width="1"/>
<path d="M495.6 705.5 q0 -8 7 -9.500 q4.500 1 4.500 6 l0 3.500 l-3.500 2.500 l-8 0z" fill="#e8ecf4" stroke="#34457f" stroke-width="0.800"/><path d="M499.1 698.5 q3.500 0 5 3.500 l0 3.500" fill="none" stroke="#34457f" stroke-width="0.700"/>
<path d="M517.5 709 l0 3" stroke="#444" stroke-width="1"/>
<path d="M511.5 705.5 q0 -8 7 -9.500 q4.500 1 4.500 6 l0 3.500 l-3.500 2.500 l-8 0z" fill="#e8ecf4" stroke="#34457f" stroke-width="0.800"/><path d="M515.0 698.5 q3.500 0 5 3.500 l0 3.500" fill="none" stroke="#34457f" stroke-width="0.700"/>
<path d="M533.4 709 l0 3" stroke="#444" stroke-width="1"/>
<path d="M527.4 705.5 q0 -8 7 -9.500 q4.500 1 4.500 6 l0 3.500 l-3.500 2.500 l-8 0z" fill="#e8ecf4" stroke="#34457f" stroke-width="0.800"/><path d="M530.9 698.5 q3.500 0 5 3.500 l0 3.500" fill="none" stroke="#34457f" stroke-width="0.700"/>
<path d="M549.3 709 l0 3" stroke="#444" stroke-width="1"/>
<rect x="543.8" y="696.5" width="9.800" height="9.800" fill="#f2f2f6" stroke="#22264a" stroke-width="1.300"/><path d="M547.8 700.0 l3.500 -3.500 l2.500 0 l0 2.500 l-3.500 3.500z" fill="#f0d820"/><path d="M545.8 704.0 l0 -5 M545.8 704.0 l5 0 M545.8 704.0 l3.500 -3.500" stroke="#22264a" stroke-width="1.100" fill="none"/>
<path d="M565.3 709 l0 3" stroke="#444" stroke-width="1"/>
<rect x="559.8" y="696.5" width="9.800" height="9.800" fill="#f2f2f6" stroke="#22264a" stroke-width="1.300"/><path d="M563.8 700.0 l3.500 -3.500 l2.500 0 l0 2.500 l-3.500 3.500z" fill="#f0d820"/><path d="M561.8 704.0 l0 -5 M561.8 704.0 l5 0 M561.8 704.0 l3.500 -3.500" stroke="#22264a" stroke-width="1.100" fill="none"/>
<path d="M581.2 709 l0 3" stroke="#444" stroke-width="1"/>
<path d="M575.2 698.0 l2 -2 l5 0 l0 9 l-2 2 l-5 0z" fill="#bcc8ee" stroke="#4a5a90" stroke-width="0.800"/><path d="M575.2 698.0 l5 0 l0 9 M580.2 698.0 l2 -2" fill="none" stroke="#3a4a80" stroke-width="0.700"/><path d="M584.7 706.5 l0 -9" stroke="#333" stroke-width="0.900"/><path d="M583.2 698.5 l1.500 -2.500 l1.500 2.500z" fill="#333"/>
<path d="M597.1 709 l0 3" stroke="#444" stroke-width="1"/>
<path d="M591.1 705.5 q0 -8 7 -9.500 q4.500 1 4.500 6 l0 3.500 l-3.500 2.500 l-8 0z" fill="#e8ecf4" stroke="#34457f" stroke-width="0.800"/><path d="M594.6 698.5 q3.500 0 5 3.500 l0 3.500" fill="none" stroke="#34457f" stroke-width="0.700"/>
<path d="M613.1 709 l0 3" stroke="#444" stroke-width="1"/>
<rect x="607.6" y="696.5" width="9.800" height="9.800" fill="#f2f2f6" stroke="#22264a" stroke-width="1.300"/><path d="M611.6 700.0 l3.500 -3.500 l2.500 0 l0 2.500 l-3.500 3.500z" fill="#f0d820"/><path d="M609.6 704.0 l0 -5 M609.6 704.0 l5 0 M609.6 704.0 l3.500 -3.500" stroke="#22264a" stroke-width="1.100" fill="none"/>
<path d="M629.0 709 l0 3" stroke="#444" stroke-width="1"/>
<path d="M623.0 698.0 l2 -2 l5 0 l0 9 l-2 2 l-5 0z" fill="#bcc8ee" stroke="#4a5a90" stroke-width="0.800"/><path d="M623.0 698.0 l5 0 l0 9 M628.0 698.0 l2 -2" fill="none" stroke="#3a4a80" stroke-width="0.700"/><path d="M632.5 706.5 l0 -9" stroke="#333" stroke-width="0.900"/><path d="M631.0 698.5 l1.500 -2.500 l1.500 2.500z" fill="#333"/>
<path d="M644.9 709 l0 3" stroke="#444" stroke-width="1"/>
<rect x="639.4" y="696.5" width="9.800" height="9.800" fill="#f2f2f6" stroke="#22264a" stroke-width="1.300"/><path d="M643.4 700.0 l3.500 -3.500 l2.500 0 l0 2.500 l-3.500 3.500z" fill="#f0d820"/><path d="M641.4 704.0 l0 -5 M641.4 704.0 l5 0 M641.4 704.0 l3.500 -3.500" stroke="#22264a" stroke-width="1.100" fill="none"/>
<path d="M660.8 709 l0 3" stroke="#444" stroke-width="1"/>
<path d="M654.8 698.0 l2 -2 l5 0 l0 9 l-2 2 l-5 0z" fill="#bcc8ee" stroke="#4a5a90" stroke-width="0.800"/><path d="M654.8 698.0 l5 0 l0 9 M659.8 698.0 l2 -2" fill="none" stroke="#3a4a80" stroke-width="0.700"/><path d="M664.3 706.5 l0 -9" stroke="#333" stroke-width="0.900"/><path d="M662.8 698.5 l1.500 -2.500 l1.500 2.500z" fill="#333"/>
<path d="M676.8 709 l0 3" stroke="#444" stroke-width="1"/>
<path d="M670.8 705.5 q0 -8 7 -9.500 q4.500 1 4.500 6 l0 3.500 l-3.500 2.500 l-8 0z" fill="#e8ecf4" stroke="#34457f" stroke-width="0.800"/><path d="M674.3 698.5 q3.500 0 5 3.500 l0 3.500" fill="none" stroke="#34457f" stroke-width="0.700"/>
<path d="M692.7 709 l0 3" stroke="#444" stroke-width="1"/>
<rect x="687.2" y="696.5" width="9.800" height="9.800" fill="#f2f2f6" stroke="#22264a" stroke-width="1.300"/><path d="M691.2 700.0 l3.500 -3.500 l2.500 0 l0 2.500 l-3.500 3.500z" fill="#f0d820"/><path d="M689.2 704.0 l0 -5 M689.2 704.0 l5 0 M689.2 704.0 l3.500 -3.500" stroke="#22264a" stroke-width="1.100" fill="none"/>
<path d="M708.6 709 l0 3" stroke="#444" stroke-width="1"/>
<path d="M702.6 698.0 l2 -2 l5 0 l0 9 l-2 2 l-5 0z" fill="#bcc8ee" stroke="#4a5a90" stroke-width="0.800"/><path d="M702.6 698.0 l5 0 l0 9 M707.6 698.0 l2 -2" fill="none" stroke="#3a4a80" stroke-width="0.700"/><path d="M712.1 706.5 l0 -9" stroke="#333" stroke-width="0.900"/><path d="M710.6 698.5 l1.500 -2.500 l1.500 2.500z" fill="#333"/>
<path d="M724.6 709 l0 3" stroke="#444" stroke-width="1"/>
<rect x="719.1" y="696.5" width="3.500" height="3.500" fill="#e8e8e8" stroke="#34457f" stroke-width="0.700"/><circle cx="723.1" cy="704.5" r="2.300" fill="#c8dcf8" stroke="#34457f" stroke-width="0.700"/><path d="M720.6 700.0 l0 5 l4 0" stroke="#333" stroke-width="0.800" fill="none"/>
<path d="M740.5 709 l0 3" stroke="#444" stroke-width="1"/>
<path d="M734.5 705.5 q0 -8 7 -9.500 q4.500 1 4.500 6 l0 3.500 l-3.500 2.500 l-8 0z" fill="#e8ecf4" stroke="#34457f" stroke-width="0.800"/><path d="M738.0 698.5 q3.500 0 5 3.500 l0 3.500" fill="none" stroke="#34457f" stroke-width="0.700"/>
<path d="M756.4 709 l0 3" stroke="#444" stroke-width="1"/>
<rect x="750.4" y="699.0" width="6" height="8" fill="#eee" stroke="#334" stroke-width="0.700"/><circle cx="758.4" cy="701.0" r="4.300" fill="#5a7ac8" stroke="#223" stroke-width="0.700"/><path d="M758.4 696.7 a4.300 4.300 0 0 1 4.300 4.300 l-4.300 0z" fill="#d8e4f8"/>
<path d="M762 691.500 l9.500 0 l0 2 l-4 4 l0 14.500 l-1.500 0 l0 -14.500 l-4 -4z" fill="#555"/>
<text x="60.7" y="125.6" font-size="8.2" fill="#2a2a2a" stroke="#2a2a2a" stroke-width="0.25" textLength="66.9" lengthAdjust="spacingAndGlyphs">Document Settings</text>
<text x="60.7" y="141.6" font-size="8.2" fill="#2a2a2a" stroke="#2a2a2a" stroke-width="0.25" textLength="47.3" lengthAdjust="spacingAndGlyphs">Named Views</text>
<text x="77.2" y="157.6" font-size="8.2" fill="#2a2a2a" stroke="#2a2a2a" stroke-width="0.25" textLength="22.0" lengthAdjust="spacingAndGlyphs">Origin</text>
<text x="77.2" y="173.6" font-size="8.2" fill="#2a2a2a" stroke="#2a2a2a" stroke-width="0.25" textLength="23.2" lengthAdjust="spacingAndGlyphs">Bodies</text>
<text x="77.2" y="205.6" font-size="8.2" fill="#2a2a2a" stroke="#2a2a2a" stroke-width="0.25" textLength="31.0" lengthAdjust="spacingAndGlyphs">Sketches</text>
<text x="77.2" y="221.6" font-size="8.2" fill="#2a2a2a" stroke="#2a2a2a" stroke-width="0.25" textLength="45.6" lengthAdjust="spacingAndGlyphs">Construction</text>
<text x="80.8" y="237.6" font-size="8.2" fill="#2a2a2a" stroke="#2a2a2a" stroke-width="0.25" textLength="22.4" lengthAdjust="spacingAndGlyphs">Base:1</text>
<text x="68.5" y="109.6" font-size="8.2" fill="#fff" font-weight="bold" textLength="105.8" lengthAdjust="spacingAndGlyphs">Luminária Fábrica LUCAS v1</text>
<text x="89.8" y="189.6" font-size="8.2" fill="#fff" font-weight="bold" textLength="20.1" lengthAdjust="spacingAndGlyphs">Lamp</text>
<text x="1236.0" y="679.0" font-size="8.2" fill="#1a1a1a" font-weight="bold" textLength="20.0" lengthAdjust="spacingAndGlyphs">Lamp</text>
<text x="24.0" y="32.0" font-size="9.8" fill="#2e2e2e" stroke="#2e2e2e" stroke-width="0.10" textLength="74.0" lengthAdjust="spacingAndGlyphs">Luminár...CAS v1*</text>
<text x="1180.0" y="13.0" font-size="8.2" fill="#2a2a2a" stroke="#2a2a2a" stroke-width="0.20" textLength="49.5" lengthAdjust="spacingAndGlyphs">Aaron Magnin</text>
<text x="27.0" y="61.2" font-size="8.6" fill="#fff" font-weight="bold" textLength="27.0" lengthAdjust="spacingAndGlyphs">MODEL</text>
<text x="21.0" y="91.0" font-size="7.8" fill="#444" stroke="#444" stroke-width="0.15" textLength="33.0" lengthAdjust="spacingAndGlyphs">BROWSER</text>
<text x="20.7" y="678.0" font-size="7.8" fill="#444" stroke="#444" stroke-width="0.15" textLength="41.0" lengthAdjust="spacingAndGlyphs">COMMENTS</text>
<text x="103.0" y="75.5" font-size="8.3" fill="#333" stroke="#333" stroke-width="0.20" textLength="27.0" lengthAdjust="spacingAndGlyphs">SKETCH</text>
<text x="179.2" y="75.5" font-size="8.3" fill="#333" stroke="#333" stroke-width="0.20" textLength="27.0" lengthAdjust="spacingAndGlyphs">CREATE</text>
<text x="235.8" y="75.5" font-size="8.3" fill="#333" stroke="#333" stroke-width="0.20" textLength="28.0" lengthAdjust="spacingAndGlyphs">MODIFY</text>
<text x="287.0" y="75.5" font-size="8.3" fill="#333" stroke="#333" stroke-width="0.20" textLength="35.0" lengthAdjust="spacingAndGlyphs">ASSEMBLE</text>
<text x="346.8" y="75.5" font-size="8.3" fill="#333" stroke="#333" stroke-width="0.20" textLength="43.2" lengthAdjust="spacingAndGlyphs">CONSTRUCT</text>
<text x="412.5" y="75.5" font-size="8.3" fill="#333" stroke="#333" stroke-width="0.20" textLength="29.2" lengthAdjust="spacingAndGlyphs">INSPECT</text>
<text x="461.8" y="75.5" font-size="8.3" fill="#333" stroke="#333" stroke-width="0.20" textLength="24.5" lengthAdjust="spacingAndGlyphs">INSERT</text>
<text x="508.0" y="75.5" font-size="8.3" fill="#333" stroke="#333" stroke-width="0.20" textLength="19.5" lengthAdjust="spacingAndGlyphs">MAKE</text>
<text x="547.0" y="75.5" font-size="8.3" fill="#333" stroke="#333" stroke-width="0.20" textLength="31.8" lengthAdjust="spacingAndGlyphs">ADD-INS</text>
<text x="599.5" y="75.5" font-size="8.3" fill="#333" stroke="#333" stroke-width="0.20" textLength="25.5" lengthAdjust="spacingAndGlyphs">SELECT</text>
</svg>
</body></html>
